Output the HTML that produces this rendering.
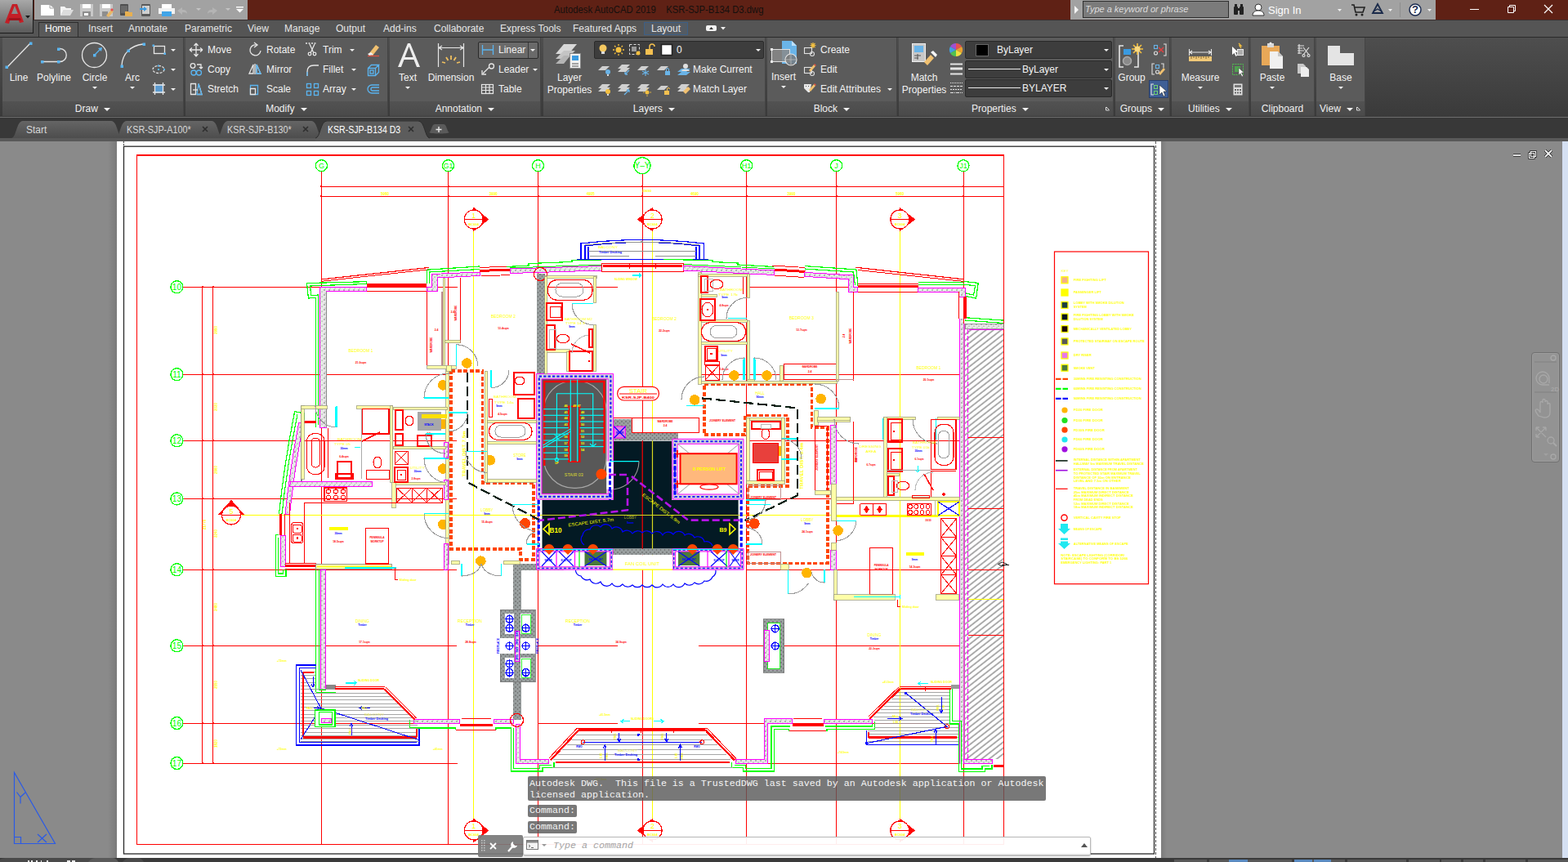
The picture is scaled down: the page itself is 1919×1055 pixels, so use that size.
<!DOCTYPE html>
<html lang="en">
<head>
<meta charset="utf-8">
<title>Autodesk AutoCAD 2019 - KSR-SJP-B134 D3.dwg</title>
<style>
*{box-sizing:border-box;margin:0;padding:0}
html,body{width:1919px;height:1055px;overflow:hidden;background:#8a8a8a;font-family:"Liberation Sans",sans-serif;font-size:12px;color:#f0f0f0}
.abs{position:absolute}
#titlebar{position:absolute;left:0;top:0;width:1919px;height:24px;background:#5f2115}
#appbtn{position:absolute;left:0;top:0;width:41px;height:41px;background:linear-gradient(#a8a8a8,#5a5a5a);border:1px solid #1c1c1c;border-top:none;border-left:none;z-index:5}
#qat{position:absolute;left:42px;top:0;width:261px;height:24px;background:#a2a2a2}
#title{position:absolute;left:678px;top:5px;font-size:12px;color:#15100e;white-space:pre;transform:scaleX(.94);transform-origin:0 0}
#search{position:absolute;left:1310px;top:0;width:447px;height:24px;background:#a2a2a2}
#searchbox{position:absolute;left:15px;top:1px;width:179px;height:21px;background:#7b7b7b;border:1px solid #2e2e2e;color:#dcdcdc;font-style:italic;font-size:11px;line-height:19px;padding-left:2px}
#menurow{position:absolute;left:0;top:24px;width:1919px;height:21px;background:#555;border-top:1px solid #3a3030}
.mt{position:absolute;top:3px;font-size:12px;color:#e6e6e6;white-space:nowrap}
#hometab{position:absolute;left:47px;top:2px;width:49px;height:18px;background:#595959;border:1px solid #2e2e2e;border-bottom:none}
#layouttab{position:absolute;left:788px;top:2px;width:54px;height:16px;background:#545b63;border:1px solid #3d5f86}
#ribbon{position:absolute;left:0;top:45px;width:1919px;height:98px;background:#3f3f3f;border-top:1px solid #2c2c2c}
.panel{position:absolute;top:0px;height:96px;background:#5b5b5b;border-right:1px solid #444}
.ptitle{position:absolute;left:0;right:0;bottom:0;height:18px;background:linear-gradient(#525252,#4a4a4a);text-align:center;font-size:12px;line-height:18px;color:#f0f0f0}
.rl{position:absolute;font-size:12px;color:#f2f2f2;white-space:nowrap}
.dd{position:absolute;width:0;height:0;border-left:3px solid transparent;border-right:3px solid transparent;border-top:3px solid #f0f0f0}
#gap{position:absolute;left:0;top:143px;width:1919px;height:5px;background:#383838;border-top:1px solid #6e6e6e}
#filetabs{position:absolute;left:0;top:148px;width:1919px;height:25px;background:#3b3b3b}
#ftstrip{position:absolute;left:0;top:169px;width:1919px;height:4px;background:#505050}
#draw{position:absolute;left:0;top:173px;width:1919px;height:877px;background:#8a8a8a;overflow:hidden}
#status{position:absolute;left:0;top:1050px;width:1919px;height:5px;background:#3a3a3a}
#cmdhist div{position:absolute;background:rgba(90,90,90,.82);color:#f4f4f4;font-family:"Liberation Mono",monospace;font-size:11.67px;white-space:pre;border-radius:2px}
.pa{display:inline-block;width:0;height:0;border-left:4px solid transparent;border-right:4px solid transparent;border-top:4px solid #f0f0f0;margin-left:4px;position:relative;top:-1px}
.ft{position:absolute;top:4px;white-space:nowrap;transform-origin:0 0}
</style>
</head>
<body>
<div id="titlebar"></div>
<div id="qat">
<svg class="abs" style="left:0;top:0" width="261" height="24" viewBox="42 0 261 24">
<path d="M50 6h11l5 4v9H50z" fill="#fff"/><path d="M61 6v4h5" fill="none" stroke="#a2a2a2" stroke-width="1"/>
<path d="M74 8h5l2 2h6v2H78l-3 7H74z" fill="#f4f4f4"/><path d="M78 12h12l-4 7H74z" fill="#dcdcdc"/>
<path d="M98 5h16v15H98z" fill="#c8c8c8"/><rect x="101" y="5" width="10" height="5" fill="#fff"/><rect x="101" y="14" width="10" height="6" fill="#8e8e8e"/><rect x="103" y="16" width="5" height="3" fill="#fff"/>
<path d="M122 5h16v15H122z" fill="#c8c8c8"/><rect x="125" y="5" width="10" height="5" fill="#fff"/><rect x="125" y="14" width="7" height="6" fill="#8e8e8e"/><path d="M130 19l6-7 3 2-6 7z" fill="#e8b868"/><path d="M135 12l2-2 2 2-2 2z" fill="#e85050"/>
<rect x="147" y="5" width="10" height="14" rx="1" fill="#505050"/><rect x="148" y="7" width="8" height="9" fill="#6a6a6a"/><path d="M153 14h4l1 1h4v5h-9z" fill="#e8b050"/>
<rect x="173" y="5" width="11" height="15" rx="1" fill="#5a5a5a"/><rect x="174" y="7" width="9" height="10" fill="#d0d0d0"/><path d="M171 10h5v-2l4 3-4 3v-2h-5z" fill="#3a9ae0"/>
<path d="M198 5h12v5h-12z" fill="#fff"/><path d="M194 10h20v7h-20z" fill="#f2f2f2"/><rect x="198" y="14" width="12" height="6" fill="#42a5e8"/>
<path d="M217 13l6-4v3c5 0 6 2 6 5-1-2-3-2-6-2v3z" fill="#b4b4b4"/><path d="M240 10h6l-3 3z" fill="#c4c4c4"/>
<path d="M266 13l-6-4v3c-5 0-6 2-6 5 1-2 3-2 6-2v3z" fill="#b4b4b4"/><path d="M276 10h6l-3 3z" fill="#c4c4c4"/>
<rect x="289" y="8" width="9" height="1.5" fill="#f8f8f8"/><path d="M289 11h9l-4.5 4.500z" fill="#f8f8f8"/>
</svg>
</div>
<div id="title">Autodesk AutoCAD 2019    KSR-SJP-B134 D3.dwg</div>
<div id="search">
<svg class="abs" style="left:4px;top:7px" width="8" height="10"><path d="M1 0l5 5-5 5z" fill="#f4f4f4"/></svg>
<div id="searchbox">Type a keyword or phrase</div>
<svg class="abs" style="left:196px;top:0" width="251" height="24" viewBox="1506 0 251 24">
<g fill="#222"><rect x="1510" y="8" width="5" height="10" rx="1"/><rect x="1517" y="8" width="5" height="10" rx="1"/><rect x="1511" y="5" width="3" height="4"/><rect x="1518" y="5" width="3" height="4"/><rect x="1514" y="10" width="4" height="3"/></g>
<circle cx="1540" cy="9" r="4" fill="#fff" stroke="#333" stroke-width="1"/><path d="M1533 19c0-5 4-6 7-6s7 1 7 6z" fill="#fff" stroke="#333" stroke-width="1"/>
<path d="M1637 11h5l-2.500 3z" fill="#f0f0f0"/>
<path d="M1654 6h3l2 9h9l2-6h-12" fill="none" stroke="#222" stroke-width="1.600"/><circle cx="1660" cy="18" r="1.500" fill="#222"/><circle cx="1667" cy="18" r="1.500" fill="#222"/>
<path d="M1686 5l6 11h-12z" fill="none" stroke="#1a2a4a" stroke-width="1.800"/><path d="M1681 14l5-3 5 3" fill="none" stroke="#1a2a4a" stroke-width="1.400"/>
<path d="M1699 11h5l-2.500 3z" fill="#f0f0f0"/>
<rect x="1713" y="3" width="1" height="18" fill="#8e8e8e"/>
<circle cx="1732" cy="12" r="7" fill="#fff" stroke="#1c2c50" stroke-width="1.500"/>
<path d="M1747 11h5l-2.500 3z" fill="#f0f0f0"/>
</svg>
<div class="abs" style="left:242px;top:5px;font-size:13px;color:#fff">Sign In</div>
<div class="abs" style="left:418px;top:4px;font-size:13px;font-weight:bold;color:#1c2c50">?</div>
</div>
<svg class="abs" style="left:1780px;top:0" width="139" height="24" viewBox="1780 0 139 24">
<path d="M1799 11.500h11" stroke="#fff" stroke-width="1"/>
<path d="M1845.500 8.500h7v7h-7z M1847.500 8.500v-2h7v7h-2" fill="none" stroke="#fff" stroke-width="1"/>
<path d="M1890 6l10 10M1900 6l-10 10" stroke="#fff" stroke-width="1.200"/>
</svg>
<div id="appbtn">
<svg class="abs" style="left:0;top:0" width="40" height="40">
<path d="M6 28L15 5h6l8 22-5 1-2-6h-9l-2 7z" fill="#c41e26"/><path d="M14 17l4-10 4 10z" fill="#8a8a8a"/><path d="M11 22h14l1 3H10z" fill="#a0141c"/>
<path d="M31 19h6l-3 3.500z" fill="#1a1a1a"/>
</svg>
</div>
<div id="menurow">
<div id="hometab"></div>
<div id="layouttab"></div>
<div class="mt" style="left:55px;color:#fff">Home</div>
<div class="mt" style="left:108px">Insert</div>
<div class="mt" style="left:157px">Annotate</div>
<div class="mt" style="left:226px">Parametric</div>
<div class="mt" style="left:303px">View</div>
<div class="mt" style="left:348px">Manage</div>
<div class="mt" style="left:411px">Output</div>
<div class="mt" style="left:469px">Add-ins</div>
<div class="mt" style="left:531px">Collaborate</div>
<div class="mt" style="left:612px">Express Tools</div>
<div class="mt" style="left:701px">Featured Apps</div>
<div class="mt" style="left:797px">Layout</div>
<svg class="abs" style="left:862px;top:5px" width="30" height="10"><rect x="2" y="1" width="13" height="7" rx="2" fill="#f2f2f2"/><path d="M6 6l2.500-3 2.500 3z" fill="#333"/><path d="M20 3h6l-3 3.500z" fill="#f0f0f0"/></svg>
</div>
<div id="ribbonbg" class="abs" style="left:0;top:45px;width:1919px;height:98px;background:linear-gradient(#4e4e4e,#3a3a3a);border-top:1px solid #2a2a2a"></div>
<div class="panel" style="left:3px;top:46px;width:222px">
<div class="ptitle">Draw <span class="pa"></span></div>
</div>
<div class="panel" style="left:227px;top:46px;width:248px">
<div class="ptitle">Modify <span class="pa"></span></div>
</div>
<div class="panel" style="left:477px;top:46px;width:185px">
<div class="ptitle">Annotation <span class="pa"></span></div>
</div>
<div class="panel" style="left:665px;top:46px;width:272px">
<div class="ptitle">Layers <span class="pa"></span></div>
</div>
<div class="panel" style="left:939px;top:46px;width:159px">
<div class="ptitle">Block <span class="pa"></span></div>
</div>
<div class="panel" style="left:1100px;top:46px;width:263px">
<div class="ptitle" style="padding-right:14px">Properties <span class="pa"></span></div>
</div>
<div class="panel" style="left:1365px;top:46px;width:67px">
<div class="ptitle">Groups <span class="pa"></span></div>
</div>
<div class="panel" style="left:1434px;top:46px;width:95px">
<div class="ptitle">Utilities <span class="pa"></span></div>
</div>
<div class="panel" style="left:1531px;top:46px;width:78px">
<div class="ptitle">Clipboard</div>
</div>
<div class="panel" style="left:1611px;top:46px;width:60px">
<div class="ptitle" style="text-align:left;padding-left:4px">View <span class="pa"></span></div>
</div>
<div class="rl" style="left:-27px;top:88px;width:100px;text-align:center">Line</div>
<div class="rl" style="left:16px;top:88px;width:100px;text-align:center">Polyline</div>
<div class="rl" style="left:66px;top:88px;width:100px;text-align:center">Circle</div>
<div class="rl" style="left:112px;top:88px;width:100px;text-align:center">Arc</div>
<div class="dd" style="left:113px;top:106px"></div>
<div class="dd" style="left:159px;top:106px"></div>
<div class="dd" style="left:209px;top:60px"></div>
<div class="dd" style="left:209px;top:84px"></div>
<div class="dd" style="left:209px;top:108px"></div>
<div class="rl" style="left:254px;top:54px">Move</div>
<div class="rl" style="left:254px;top:78px">Copy</div>
<div class="rl" style="left:254px;top:102px">Stretch</div>
<div class="rl" style="left:326px;top:54px">Rotate</div>
<div class="rl" style="left:326px;top:78px">Mirror</div>
<div class="rl" style="left:326px;top:102px">Scale</div>
<div class="rl" style="left:395px;top:54px">Trim</div>
<div class="rl" style="left:395px;top:78px">Fillet</div>
<div class="rl" style="left:395px;top:102px">Array</div>
<div class="dd" style="left:428px;top:60px"></div>
<div class="dd" style="left:430px;top:84px"></div>
<div class="dd" style="left:430px;top:108px"></div>
<div class="rl" style="left:449px;top:88px;width:100px;text-align:center">Text</div>
<div class="dd" style="left:496px;top:106px"></div>
<div class="rl" style="left:502px;top:88px;width:100px;text-align:center">Dimension</div>
<div class="abs" style="left:585px;top:51px;width:74px;height:21px;background:#6a6a6a;border:1px solid #2a2a2a;border-radius:2px"></div><div class="abs" style="left:646px;top:52px;width:1px;height:19px;background:#3a3a3a"></div>
<div class="rl" style="left:610px;top:54px">Linear</div>
<div class="rl" style="left:610px;top:78px">Leader</div>
<div class="rl" style="left:610px;top:102px">Table</div>
<div class="dd" style="left:649px;top:60px"></div>
<div class="dd" style="left:652px;top:84px"></div>
<div class="rl" style="left:647px;top:88px;width:100px;text-align:center">Layer</div>
<div class="rl" style="left:647px;top:103px;width:100px;text-align:center">Properties</div>
<div class="abs" style="left:727px;top:50px;width:208px;height:22px;background:#3d3d3d;border:1px solid #2a2a2a;border-radius:2px"></div>
<div class="rl" style="left:828px;top:54px">0</div>
<div class="dd" style="left:925px;top:60px"></div>
<div class="rl" style="left:848px;top:78px">Make Current</div>
<div class="rl" style="left:848px;top:102px">Match Layer</div>
<div class="rl" style="left:909px;top:87px;width:100px;text-align:center">Insert</div>
<div class="dd" style="left:956px;top:105px"></div>
<div class="rl" style="left:1004px;top:54px">Create</div>
<div class="rl" style="left:1004px;top:78px">Edit</div>
<div class="rl" style="left:1004px;top:102px">Edit Attributes</div>
<div class="dd" style="left:1086px;top:108px"></div>
<div class="rl" style="left:1081px;top:88px;width:100px;text-align:center">Match</div>
<div class="rl" style="left:1081px;top:103px;width:100px;text-align:center">Properties</div>
<div class="abs" style="left:1181px;top:50px;width:180px;height:22px;background:#3d3d3d;border:1px solid #2a2a2a;border-radius:2px"></div>
<div class="rl" style="left:1220px;top:54px">ByLayer</div>
<div class="dd" style="left:1351px;top:60px"></div>
<div class="abs" style="left:1181px;top:74px;width:180px;height:22px;background:#3d3d3d;border:1px solid #2a2a2a;border-radius:2px"></div>
<div class="rl" style="left:1251px;top:78px">ByLayer</div>
<div class="dd" style="left:1351px;top:84px"></div>
<div class="abs" style="left:1181px;top:97px;width:180px;height:22px;background:#3d3d3d;border:1px solid #2a2a2a;border-radius:2px"></div>
<div class="rl" style="left:1251px;top:101px">BYLAYER</div>
<div class="dd" style="left:1351px;top:107px"></div>
<div class="abs" style="left:1194px;top:54px;width:16px;height:15px;background:#000;border:1px solid #666"></div>
<div class="abs" style="left:1185px;top:84px;width:64px;height:1px;background:#e8e8e8"></div><div class="abs" style="left:1185px;top:107px;width:64px;height:1px;background:#e8e8e8"></div>
<div class="rl" style="left:1335px;top:88px;width:100px;text-align:center">Group</div>
<div class="abs" style="left:1406px;top:98px;width:24px;height:22px;background:#3f5f96;border:1px solid #2a3f6a"></div>
<div class="rl" style="left:1419px;top:88px;width:100px;text-align:center">Measure</div>
<div class="dd" style="left:1466px;top:106px"></div>
<div class="rl" style="left:1507px;top:88px;width:100px;text-align:center">Paste</div>
<div class="dd" style="left:1554px;top:106px"></div>
<div class="rl" style="left:1591px;top:88px;width:100px;text-align:center">Base</div>
<div class="dd" style="left:1638px;top:106px"></div>
<svg class="abs" style="left:0;top:45px" width="1919" height="98" viewBox="0 45 1919 98" fill="none" stroke-linecap="butt">
<g id="draw-icons" stroke="#e6e6e6" stroke-width="1.300">
<path d="M9 82L37 53"/><g fill="#5ab4f0" stroke="none"><rect x="6.500" y="80.500" width="3.500" height="3.500"/><rect x="36" y="51.500" width="3.500" height="3.500"/></g>
<path d="M52 75.500h19M73 59.500c11 0 11 16 0 16"/><g fill="#5ab4f0" stroke="none"><rect x="50" y="74" width="3.500" height="3.500"/><rect x="70" y="74" width="3.500" height="3.500"/><rect x="70" y="58.500" width="3.500" height="3.500"/></g>
<circle cx="115.500" cy="67.500" r="15"/><path d="M116 67l8-8" stroke="#5ab4f0"/><path d="M125 58l-1 5-4-4z" fill="#5ab4f0" stroke="none"/><rect x="114" y="66" width="3.500" height="3.500" fill="#5ab4f0" stroke="none"/>
<path d="M149 80c1-15 11-24 26-26"/><g fill="#5ab4f0" stroke="none"><rect x="147.500" y="79.500" width="3.500" height="3.500"/><rect x="155.500" y="60.500" width="3.500" height="3.500"/><rect x="174.500" y="52.500" width="3.500" height="3.500"/></g>
<rect x="188.500" y="56.500" width="13" height="9"/><g fill="#5ab4f0" stroke="none"><rect x="186.500" y="54.500" width="2.500" height="2.500"/><rect x="200.500" y="64.500" width="2.500" height="2.500"/></g>
<ellipse cx="194" cy="85" rx="7" ry="4.500" stroke-dasharray="3 1.500"/><g fill="#5ab4f0" stroke="none"><rect x="193" y="84" width="2" height="2"/><rect x="193" y="79.500" width="2" height="2"/><rect x="200" y="84" width="2" height="2"/></g>
<rect x="189" y="103" width="11" height="11" fill="#5a9ad0" stroke="none"/><path d="M187 104h15M187 113h15M189.500 101v15M199.500 101v15"/>
</g>
<g id="modify-icons" stroke="#e6e6e6" stroke-width="1.300">
<path d="M240 53v16M232 61h16M240 53l-2.500 3M240 53l2.500 3M240 69l-2.500-3M240 69l2.500-3M232 61l3-2.500M232 61l3 2.500M248 61l-3-2.500M248 61l-3 2.500"/>
<circle cx="236" cy="80.500" r="2.800"/><circle cx="237" cy="89" r="3" stroke="#5ab4f0"/><circle cx="243.500" cy="89" r="3" stroke="#5ab4f0"/><path d="M241 79h5v5M246 84l-2-2M246 84l2-2" />
<path d="M233.500 102.500h6v13h-6zM241 115.500h6l-4-13" /><path d="M241 115.500h6l-4-13z" stroke="#5ab4f0"/><path d="M236 110h6" />
<path d="M319 62a6.500 6.500 0 1 1-5-7" /><path d="M311 52l4 3-4 3" />
<path d="M312 78v13M310 90h-5l5-11zM314 90h5l-5-11z"/><path d="M314 90h5l-5-11z" stroke="#5ab4f0"/>
<path d="M306.500 104.500h9v11h-9z" stroke="#5ab4f0"/><path d="M306.500 108.500h6v7h-6z" fill="#595959"/>
<path d="M374 53h14" stroke-dasharray="2 1.500"/><path d="M379 54l5 11M385 54l-5 11"/><circle cx="379" cy="66" r="1.800"/><circle cx="385" cy="66" r="1.800"/>
<path d="M376 93v-5c0-5 3-8 8-8h6" /><path d="M376 93v-5" stroke="#5ab4f0"/>
<g stroke="#5ab4f0"><rect x="375.500" y="102.500" width="5" height="5"/><rect x="384.500" y="102.500" width="5" height="5"/><rect x="375.500" y="111.500" width="5" height="5"/><rect x="384.500" y="111.500" width="5" height="5"/></g>
<path d="M452 65l8-10 4 3-8 10z" fill="#f0c070" stroke="none"/><path d="M450 66l4-2 3 3-5 1z" fill="#f2f2f2" stroke="none"/><path d="M450 68.500h14" stroke="#e05040"/>
<g stroke="#5ab4f0"><path d="M450.500 83.500h9v9h-9zM450.500 83.500l4-4h9l-4 4M459.500 92.500l4-4v-9"/><rect x="453" y="86" width="4" height="4"/></g>
<g stroke="#5ab4f0"><path d="M464 104h-9a5 5 0 0 0 0 10h9M464 107h-8a2 2 0 0 0 0 4h8"/></g>
</g>
<g id="annot-icons">
<path d="M487 82L499 53h3L514 82h-4l-3.500-9h-12L491 82zM495.500 70h10l-5-13z" fill="#ededed" fill-rule="evenodd"/>
<g stroke="#e6e6e6" stroke-width="1.200"><path d="M536.500 53v29M567.500 53v29M537 58.500h30M537 58.500l4-2.500M537 58.500l4 2.500M567 58.500l-4-2.500M567 58.500l-4 2.500"/></g>
<g stroke="#f0c060" stroke-width="1.800"><path d="M552 68v5M546 70l2.500 4M558 70l-2.500 4M541 76l4 1M563 76l-4 1"/></g>
<g stroke="#5ab4f0" stroke-width="1.300"><path d="M590.500 55v12M603.500 55v12M591 61h12"/></g>
<g stroke="#e6e6e6" stroke-width="1.300"><path d="M591 90l8-8"/><circle cx="601.500" cy="81" r="3"/><path d="M590 86v5h5"/></g>
<g stroke="#e6e6e6" stroke-width="1.200"><rect x="589.500" y="103.500" width="14" height="11"/><path d="M589.500 107h14M589.500 110.500h14M594.500 104v11M599 104v11"/></g>
</g>
<g id="layer-icons">
<g fill="#d8d8d8"><path d="M680 66l10-12h16l-10 12z"/><path d="M680 72l10-10h14l-10 10z" fill="#c4c4c4"/><path d="M680 78l10-10h8l-8 10z" fill="#b4b4b4"/></g>
<rect x="697.500" y="65.500" width="13" height="18" fill="#f0f0f0" stroke="#888"/><rect x="700" y="68" width="8" height="6" fill="#3a9ae0"/><path d="M700 78h8M700 81h8" stroke="#555"/>
<circle cx="738" cy="59" r="4.500" fill="#f4c860"/><rect x="736" y="63" width="4" height="3" fill="#ddd"/>
<circle cx="757" cy="61" r="3.500" fill="#f4c040"/><g stroke="#f4c040" stroke-width="1.300"><path d="M757 54v2M757 66v2M750 61h2M762 61h2M752 56l1.500 1.500M762 56l-1.500 1.500M752 66l1.500-1.500M762 66l-1.500-1.500"/></g>
<rect x="770.500" y="54.500" width="12" height="12" stroke="#ddd" stroke-dasharray="3 2"/><rect x="773" y="57" width="6" height="6" fill="#999"/><circle cx="781" cy="65" r="2.500" fill="#f4c040"/>
<rect x="790" y="60" width="9" height="7" fill="#f4c050"/><path d="M795 60v-3a3 3 0 0 1 6 0" stroke="#f4c050" stroke-width="1.500"/>
<rect x="809.500" y="54.500" width="13" height="13" fill="#fff" stroke="#222" stroke-width="1.500"/>
<g id="lr2">
<g fill="#d0d0d0"><path d="M732 86l5-5h9l-5 5z"/><path d="M756 84l5-5h10l-5 5zM756 88l5-5h10l-5 5z"/><path d="M780 86l5-5h9l-5 5z"/><path d="M804 86l5-5h9l-5 5z"/><path d="M829 88l5-4h11l-5 4zM829 92l5-4h11l-5 4z" fill="#6ab4e8"/></g>
<circle cx="744" cy="88" r="3" fill="#6ab4e8"/><rect x="743" y="91" width="2" height="2" fill="#ddd"/>
<path d="M770 86l-5 5M765 91v-3M765 91h3" stroke="#6ab4e8" stroke-width="1.300"/>
<g stroke="#6ab4e8" stroke-width="1.200"><path d="M790 85v8M786 87l8 4M794 87l-8 4"/></g>
<rect x="814" y="87" width="6" height="5" fill="#6ab4e8"/><path d="M815.500 87v-2a1.500 1.500 0 0 1 3 0v2" stroke="#6ab4e8"/>
<circle cx="839" cy="81" r="3" fill="#e0e0e0"/><path d="M834 87c0-3 10-3 10 0z" fill="#e0e0e0"/>
</g>
<g id="lr3">
<g fill="#d0d0d0"><path d="M732 108l5-5h10l-5 5zM732 112l5-5h10l-5 5z"/><path d="M756 108l5-5h10l-5 5zM756 112l5-5h10l-5 5z"/><path d="M780 108l5-5h10l-5 5zM780 112l5-5h10l-5 5z"/><path d="M804 110l5-5h9l-5 5z"/><path d="M829 108l5-5h10l-5 5zM829 112l5-5h10l-5 5z"/></g>
<circle cx="744" cy="112" r="3" fill="#f4c040"/><rect x="743" y="115" width="2" height="2" fill="#ddd"/>
<path d="M764 116l6-6M770 110v3M770 110h-3" stroke="#6ab4e8" stroke-width="1.300"/>
<circle cx="792" cy="113" r="2.500" fill="#f4c040"/><g stroke="#f4c040"><path d="M792 108v1.500M792 116.500v1.500M787 113h1.500M795.500 113h1.500"/></g>
<rect x="813" y="111" width="6" height="5" fill="#f4c050"/><path d="M816.500 111v-2a1.500 1.500 0 0 1 3 0" stroke="#f4c050"/>
<path d="M836 112l6-6 3 3-6 6z" fill="#f0c070"/>
</g>
</g>
<g id="block-icons">
<path d="M957 50h12l6 6v22h-18z" fill="#6ab4e8"/><path d="M969 50v6h6z" fill="#bfe0f8"/>
<rect x="944.500" y="60.500" width="22" height="15" fill="#8a8a8a" fill-opacity=".85" stroke="#e0e0e0"/><circle cx="968" cy="73" r="7" fill="#777" fill-opacity=".8" stroke="#e0e0e0" stroke-width="1.200"/><path d="M968 66v14M961 73h14" stroke="#bbb" stroke-width=".8"/>
<rect x="943" y="59" width="3" height="3" fill="#e8e8e8"/><rect x="943" y="74" width="3" height="3" fill="#e8e8e8"/>
<g stroke="#e0e0e0" stroke-width="1.100"><rect x="984.500" y="58.500" width="9" height="7"/><circle cx="994" cy="66" r="2.500"/></g><g stroke="#f4c040" stroke-width="1.200"><path d="M995 52v7M991.500 55.500h7M992.500 53l5 5M997.500 53l-5 5"/></g>
<g stroke="#e0e0e0" stroke-width="1.100"><rect x="984.500" y="82.500" width="9" height="7"/><circle cx="994" cy="90" r="2.500"/></g><path d="M990 86l6-7 2 2-6 7z" fill="#f0c070"/><path d="M996 79l1-1 2 2-1 1z" fill="#e05040"/>
<path d="M984 103h9l-2 10h-2l-5-5z" fill="#e8e8e8"/><path d="M986 105l1 1M989 105l1 1" stroke="#555"/><path d="M990 110l6-7 2 2-6 7z" fill="#f0c070"/><path d="M996 103l1-1 2 2-1 1z" fill="#e05040"/>
</g>
<g id="prop-icons">
<rect x="1116.500" y="53.500" width="16" height="22" fill="#c8c8c8" stroke="#eee"/><rect x="1119" y="56" width="11" height="8" fill="#6ab4e8"/><path d="M1119 68h8M1119 71h5" stroke="#555"/><path d="M1123 66v7" stroke="#555"/>
<path d="M1131 76l8-9 4 4-8 9z" fill="#f0c070"/><path d="M1139 64l3-2 5 5-2 3z" fill="#f8f8f8"/>
<g><path d="M1170 61L1170 53A8 8 0 0 1 1177 57z" fill="#e85050"/><path d="M1170 61L1177 57A8 8 0 0 1 1177 65z" fill="#e8a030"/><path d="M1170 61L1177 65A8 8 0 0 1 1170 69z" fill="#f0e040"/><path d="M1170 61L1170 69A8 8 0 0 1 1163 65z" fill="#50c050"/><path d="M1170 61L1163 65A8 8 0 0 1 1163 57z" fill="#40a0e0"/><path d="M1170 61L1163 57A8 8 0 0 1 1170 53z" fill="#a050d0"/></g>
<g stroke="#e4e4e4"><path d="M1163 78.500h15" stroke-width="2"/><path d="M1163 84h15" stroke-width="3"/><path d="M1163 90.500h15" stroke-width="2"/></g>
<g stroke="#e4e4e4" stroke-width="1"><path d="M1163 101.500h15" stroke-dasharray="1 1"/><path d="M1163 105.500h15" stroke-dasharray="3 1"/><path d="M1163 109.500h15" stroke-dasharray="2 1"/><path d="M1163 113.500h15" stroke-dasharray="4 1 1 1"/></g>
<path d="M1353.500 131v4h4M1354 131l3.500 3.500" stroke="#ddd"/>
</g>
<g id="group-icons">
<path d="M1375 56h-5v26h5M1393 63v19h-5" stroke="#e6e6e6" stroke-width="1.600"/><rect x="1375" y="60" width="9" height="7" fill="#3a9ae0"/><circle cx="1379.500" cy="74.500" r="5" fill="#8a8a8a" stroke="#aaa" stroke-width="1.500"/>
<g stroke="#f4c040" stroke-width="1.600"><path d="M1392 53v14M1385 60h14M1387 55l10 10M1397 55l-10 10"/></g><circle cx="1392" cy="60" r="3.500" fill="#f8d880"/>
<g stroke="#e0e0e0" stroke-width="1.100"><path d="M1424 54h3v14h-3"/><rect x="1412.500" y="55.500" width="4" height="4" stroke="#6ab4e8"/><circle cx="1414.500" cy="65" r="2"/></g><path d="M1418 58l6 6M1424 58l-6 6" stroke="#e04040" stroke-width="1.500"/>
<g stroke="#e0e0e0" stroke-width="1.100"><path d="M1413 78h-3v13h3M1421 78h3v5"/><rect x="1414.500" y="79.500" width="4" height="4" stroke="#6ab4e8"/><circle cx="1416.500" cy="88" r="2"/></g><path d="M1418 90l6-7 2 2-6 7z" fill="#f0c070"/>
<g stroke="#e8e8e8" stroke-width="1.100"><path d="M1412 103h-3v13h3"/></g><rect x="1412.500" y="104.500" width="4" height="4" stroke="#70d070" /><rect x="1412.500" y="111.500" width="4" height="4" stroke="#70d070" /><path d="M1419 104v12l3-3 2 5 2-1-2-5h4z" fill="#fff" stroke="#222" stroke-width=".6"/>
</g>
<g id="util-icons">
<g stroke="#e6e6e6" stroke-width="1.100"><path d="M1455.500 60v8M1482.500 60v8M1456 64h26M1456 64l3-2M1456 64l3 2M1482 64l-3-2M1482 64l-3 2"/></g>
<rect x="1455" y="69" width="28" height="6" fill="#f0c878"/><path d="M1458 69v3M1461 69v2M1464 69v3M1467 69v2M1470 69v3M1473 69v2M1476 69v3M1479 69v2" stroke="#7a6030"/>
<path d="M1508 57v10l2.500-2 2 4 1.500-1-2-4h3.500z" fill="#fff"/><rect x="1514" y="60" width="8" height="8" fill="#e8e8e8"/><path d="M1515 62h6M1515 64h6M1515 66h6" stroke="#555" stroke-width=".8"/><path d="M1516 53l3 3h-2l2 3" stroke="#f4c040" stroke-width="1.300"/>
<rect x="1508.500" y="78.500" width="13" height="13" stroke="#50c050" stroke-dasharray="2 1"/><rect x="1511" y="81" width="7" height="7" fill="#50a050"/><path d="M1516 83v9l2-2 2 4 1.500-1-2-4h3z" fill="#fff" stroke="#333" stroke-width=".5"/>
<rect x="1509.500" y="102.500" width="11" height="14" fill="#e0e0e0"/><rect x="1511" y="104" width="8" height="3" fill="#777"/><g fill="#666"><rect x="1511" y="109" width="2" height="2"/><rect x="1514" y="109" width="2" height="2"/><rect x="1517" y="109" width="2" height="2"/><rect x="1511" y="112.500" width="2" height="2"/><rect x="1514" y="112.500" width="2" height="2"/><rect x="1517" y="112.500" width="2" height="2"/></g>
</g>
<g id="clip-icons">
<rect x="1544" y="56" width="22" height="24" fill="#e8a858"/><rect x="1551" y="53" width="8" height="5" fill="#d8d8d8"/><circle cx="1555" cy="53" r="1.500" fill="#eee"/>
<path d="M1554 63h10l6 6v15h-16z" fill="#f0f0f0"/><path d="M1564 63v6h6z" fill="#c8c8c8"/>
<g stroke="#e0e0e0" stroke-width="1.200"><path d="M1588 56h8M1588 59h6M1588 62h8M1588 65h5M1590 54v12"/><path d="M1595 58l7 9M1602 58l-7 9"/><circle cx="1595.500" cy="68" r="1.500"/><circle cx="1601.500" cy="68" r="1.500"/></g>
<path d="M1588 78h7l3 3v9h-10z" fill="#c8c8c8"/><path d="M1592 82h7l3 3v9h-10z" fill="#eee"/>
</g>
<g id="view-icons"><path d="M1625 56h15v9h17v15h-32z" fill="#e4e4e4"/><path d="M1660.500 131v4h4M1661 131l3.500 3.500" stroke="#ddd"/></g>
</svg>
<div id="gap"></div>
<div id="filetabs">
<svg class="abs" style="left:0;top:0" width="1919" height="25" viewBox="0 148 1919 25">
<rect x="0" y="148" width="1919" height="25" fill="#383838"/>
<rect x="0" y="169" width="1919" height="4" fill="#595959"/>
<defs><linearGradient id="tg" x1="0" y1="0" x2="0" y2="1"><stop offset="0" stop-color="#656565"/><stop offset="1" stop-color="#4d4d4d"/></linearGradient></defs>
<path d="M14 169c6 0 6-21 14-21h108c8 0 8 21 14 21z" fill="url(#tg)"/>
<path d="M141 169c6 0 6-21 14-21h104c8 0 8 21 14 21z" fill="url(#tg)"/>
<path d="M265 169c6 0 6-21 14-21h102c8 0 8 21 14 21z" fill="url(#tg)"/>
<path d="M386 173v-4c6 0 6-21 14-21h112c8 0 8 21 14 21v4z" fill="#5c5c5c"/>
<path d="M386 169c6 0 6-21 14-21h112c8 0 8 21 14 21" fill="none" stroke="#2c2c2c" stroke-width="1"/>
<path d="M525 162c3 0 3-10 7-10h11c4 0 4 10 7 10c-3 2-22 2-25 0z" fill="#5a5a5a"/>
<path d="M533.500 158.500h7M537 155v7" stroke="#e8e8e8" stroke-width="1.400"/>
<g stroke="#2e2e2e" stroke-width="1.600"><path d="M248 155l6 6M254 155l-6 6"/><path d="M371 155l6 6M377 155l-6 6"/><path d="M500 155l6 6M506 155l-6 6"/></g>
</svg>
<div class="ft" style="left:32px;color:#d8d8d8">Start</div>
<div class="ft" style="left:155px;color:#d8d8d8;transform:scaleX(.9)">KSR-SJP-A100*</div>
<div class="ft" style="left:278px;color:#d8d8d8;transform:scaleX(.9)">KSR-SJP-B130*</div>
<div class="ft" style="left:401px;color:#fff;transform:scaleX(.88)">KSR-SJP-B134 D3</div>
</div>
<div id="draw">
<svg class="abs" style="left:0;top:0" width="1919" height="877" viewBox="0 173 1919 877" font-family="Liberation Sans, sans-serif">
<defs>
<linearGradient id="shl" x1="0" y1="0" x2="1" y2="0"><stop offset="0" stop-color="#8a8a8a"/><stop offset="1" stop-color="#7a7a7a"/></linearGradient>
<linearGradient id="shr" x1="0" y1="0" x2="1" y2="0"><stop offset="0" stop-color="#7c7c7c"/><stop offset="1" stop-color="#8a8a8a"/></linearGradient>
<pattern id="hatch" width="5.700" height="5.700" patternUnits="userSpaceOnUse" patternTransform="rotate(-38)"><rect width="5.700" height="5.700" fill="#fff"/><line x1="0" y1="1" x2="5.700" y2="1" stroke="#646464" stroke-width="1.050"/></pattern>
<pattern id="conc" width="6" height="6" patternUnits="userSpaceOnUse"><rect width="6" height="6" fill="#e8e8e8"/><circle cx="1" cy="1" r=".7" fill="#555"/><circle cx="4" cy="3" r=".6" fill="#666"/><circle cx="2" cy="5" r=".5" fill="#777"/></pattern>
<pattern id="conc2" width="5" height="5" patternUnits="userSpaceOnUse"><rect width="5" height="5" fill="#9aa0a0"/><circle cx="1" cy="1" r=".8" fill="#555"/><circle cx="3.500" cy="3" r=".8" fill="#666"/></pattern>
<pattern id="blued" width="6" height="6" patternUnits="userSpaceOnUse"><rect width="6" height="6" fill="#d8d8f0"/><rect x="0" y="0" width="3" height="3" fill="#2020e0"/><rect x="3" y="3" width="3" height="3" fill="#8a30c8"/></pattern>
</defs>
<rect x="0" y="173" width="1919" height="877" fill="#8a8a8a"/>
<rect x="132" y="173" width="11" height="877" fill="url(#shl)"/>
<rect x="1421" y="173" width="7" height="877" fill="url(#shr)"/>
<rect x="1912" y="173" width="7" height="877" fill="#d5e0f2"/>
<rect x="143" y="173" width="1278" height="877" fill="#fff"/>
<rect x="151.500" y="179.200" width="1261" height="865.800" fill="none" stroke="#2a2a2a" stroke-width="1.300"/><path d="M151.500 173v6" stroke="#444" stroke-width="1" stroke-dasharray="2 1"/>
<path d="M1414.500 173v877" stroke="#555" stroke-width="1" stroke-dasharray="3 2"/>
<g id="grid" font-family="Liberation Sans, sans-serif" shape-rendering="crispEdges">
<rect x="167.5" y="190" width="1061" height="843.5" fill="none" stroke="#ff0000" stroke-width="1.2"/>
<path d="M393.4 210L393.4 1033" stroke="#ff0000" stroke-width="1" fill="none"/>
<path d="M548.6 210L548.6 1033" stroke="#ff0000" stroke-width="1" fill="none"/>
<path d="M658.5 210L658.5 1033" stroke="#ff0000" stroke-width="1" fill="none"/>
<path d="M786.2 210L786.2 1033" stroke="#ff0000" stroke-width="1" fill="none"/>
<path d="M913.6 210L913.6 1033" stroke="#ff0000" stroke-width="1" fill="none"/>
<path d="M1023.6 210L1023.6 1033" stroke="#ff0000" stroke-width="1" fill="none"/>
<path d="M1179 210L1179 1033" stroke="#ff0000" stroke-width="1" fill="none"/>
<path d="M393 228L1228 228" stroke="#ff0000" stroke-width="1" fill="none"/>
<path d="M393 240L1228 240" stroke="#ff0000" stroke-width="1" fill="none"/>
<rect x="392.4" y="227" width="2" height="2" fill="#ff0000"/>
<rect x="392.4" y="239" width="2" height="2" fill="#ff0000"/>
<rect x="547.6" y="227" width="2" height="2" fill="#ff0000"/>
<rect x="547.6" y="239" width="2" height="2" fill="#ff0000"/>
<rect x="657.5" y="227" width="2" height="2" fill="#ff0000"/>
<rect x="657.5" y="239" width="2" height="2" fill="#ff0000"/>
<rect x="785.2" y="227" width="2" height="2" fill="#ff0000"/>
<rect x="785.2" y="239" width="2" height="2" fill="#ff0000"/>
<rect x="912.6" y="227" width="2" height="2" fill="#ff0000"/>
<rect x="912.6" y="239" width="2" height="2" fill="#ff0000"/>
<rect x="1022.6" y="227" width="2" height="2" fill="#ff0000"/>
<rect x="1022.6" y="239" width="2" height="2" fill="#ff0000"/>
<rect x="1178" y="227" width="2" height="2" fill="#ff0000"/>
<rect x="1178" y="239" width="2" height="2" fill="#ff0000"/>
<text x="471" y="238.5" fill="#ffff00" font-size="4.5" text-anchor="middle" font-weight="bold">5960</text>
<text x="603.7" y="238.5" fill="#ffff00" font-size="4.5" text-anchor="middle" font-weight="bold">3990</text>
<text x="722.8" y="238.5" fill="#ffff00" font-size="4.5" text-anchor="middle" font-weight="bold">4905</text>
<text x="850" y="238.5" fill="#ffff00" font-size="4.5" text-anchor="middle" font-weight="bold">4690</text>
<text x="968.4" y="238.5" fill="#ffff00" font-size="4.5" text-anchor="middle" font-weight="bold">3990</text>
<text x="1101.3" y="238.5" fill="#ffff00" font-size="4.5" text-anchor="middle" font-weight="bold">5960</text>
<text x="786" y="235" fill="#ffff00" font-size="4" text-anchor="start" font-weight="bold">33690</text>
<path d="M247.6 351L247.6 934" stroke="#ff0000" stroke-width="1" fill="none"/>
<path d="M260.8 351L260.8 934" stroke="#ff0000" stroke-width="1" fill="none"/>
<rect x="246.6" y="350.2" width="2" height="2" fill="#ff0000"/>
<rect x="259.8" y="350.2" width="2" height="2" fill="#ff0000"/>
<rect x="246.6" y="457.2" width="2" height="2" fill="#ff0000"/>
<rect x="259.8" y="457.2" width="2" height="2" fill="#ff0000"/>
<rect x="246.6" y="538.3" width="2" height="2" fill="#ff0000"/>
<rect x="259.8" y="538.3" width="2" height="2" fill="#ff0000"/>
<rect x="246.6" y="609.4" width="2" height="2" fill="#ff0000"/>
<rect x="259.8" y="609.4" width="2" height="2" fill="#ff0000"/>
<rect x="246.6" y="696.2" width="2" height="2" fill="#ff0000"/>
<rect x="259.8" y="696.2" width="2" height="2" fill="#ff0000"/>
<rect x="246.6" y="789.3" width="2" height="2" fill="#ff0000"/>
<rect x="259.8" y="789.3" width="2" height="2" fill="#ff0000"/>
<rect x="246.6" y="884" width="2" height="2" fill="#ff0000"/>
<rect x="259.8" y="884" width="2" height="2" fill="#ff0000"/>
<rect x="246.6" y="933" width="2" height="2" fill="#ff0000"/>
<rect x="259.8" y="933" width="2" height="2" fill="#ff0000"/>
<text x="266" y="404" fill="#ffff00" font-size="4.5" text-anchor="middle" font-weight="bold" transform="rotate(-90 266 404)">3990</text>
<text x="266" y="498" fill="#ffff00" font-size="4.5" text-anchor="middle" font-weight="bold" transform="rotate(-90 266 498)">3030</text>
<text x="266" y="575" fill="#ffff00" font-size="4.5" text-anchor="middle" font-weight="bold" transform="rotate(-90 266 575)">2660</text>
<text x="266" y="653" fill="#ffff00" font-size="4.5" text-anchor="middle" font-weight="bold" transform="rotate(-90 266 653)">3240</text>
<text x="266" y="743" fill="#ffff00" font-size="4.5" text-anchor="middle" font-weight="bold" transform="rotate(-90 266 743)">3480</text>
<text x="266" y="838" fill="#ffff00" font-size="4.5" text-anchor="middle" font-weight="bold" transform="rotate(-90 266 838)">3550</text>
<text x="266" y="910" fill="#ffff00" font-size="4.5" text-anchor="middle" font-weight="bold" transform="rotate(-90 266 910)">1820</text>
<text x="252" y="642" fill="#ffff00" font-size="4.5" text-anchor="middle" font-weight="bold" transform="rotate(-90 252 642)">21770</text>
<path d="M224 351.2L560 351.2" stroke="#ff0000" stroke-width="1" fill="none"/>
<path d="M668 351.2L756 351.2" stroke="#ff0000" stroke-width="1" fill="none"/>
<path d="M917 351.2L1050 351.2" stroke="#ff0000" stroke-width="1" fill="none"/>
<path d="M224 458.2L546 458.2" stroke="#ff0000" stroke-width="1" fill="none"/>
<path d="M855 458.2L1190 458.2" stroke="#ff0000" stroke-width="1" fill="none"/>
<path d="M224 539.3L559 539.3" stroke="#ff0000" stroke-width="1" fill="none"/>
<path d="M914 539.3L1190 539.3" stroke="#ff0000" stroke-width="1" fill="none"/>
<path d="M224 610.4L559 610.4" stroke="#ff0000" stroke-width="1" fill="none"/>
<path d="M914 610.4L1190 610.4" stroke="#ff0000" stroke-width="1" fill="none"/>
<path d="M224 697.2L559 697.2" stroke="#ff0000" stroke-width="1" fill="none"/>
<path d="M914 697.2L1190 697.2" stroke="#ff0000" stroke-width="1" fill="none"/>
<path d="M224 790.3L559 790.3" stroke="#ff0000" stroke-width="1" fill="none"/>
<path d="M658 790.3L755.6 790.3" stroke="#ff0000" stroke-width="1" fill="none"/>
<path d="M855.4 790.3L1190 790.3" stroke="#ff0000" stroke-width="1" fill="none"/>
<path d="M224 885L560 885" stroke="#ff0000" stroke-width="1" fill="none"/>
<path d="M658 885L755.6 885" stroke="#ff0000" stroke-width="1" fill="none"/>
<path d="M855.4 885L1190 885" stroke="#ff0000" stroke-width="1" fill="none"/>
<path d="M224 934L560 934" stroke="#ff0000" stroke-width="1" fill="none"/>
<path d="M930 934L1190 934" stroke="#ff0000" stroke-width="1" fill="none"/>
<path d="M1185 535.2L1228 535.2" stroke="#ff0000" stroke-width="1" fill="none"/>
<path d="M1185 622.3L1228 622.3" stroke="#ff0000" stroke-width="1" fill="none"/>
<path d="M1185 697.2L1228 697.2" stroke="#ff0000" stroke-width="1" fill="none"/>
<path d="M1185 777L1228 777" stroke="#ff0000" stroke-width="1" fill="none"/>
<path d="M579.7 281L579.7 1004" stroke="#ffff00" stroke-width="1.2" fill="none"/>
<path d="M798.5 281L798.5 1004" stroke="#ffff00" stroke-width="1.2" fill="none"/>
<path d="M1101.3 281L1101.3 1004" stroke="#ffff00" stroke-width="1.2" fill="none"/>
<path d="M296 630.5L1228 630.5" stroke="#ffff00" stroke-width="1.2" fill="none"/>
<circle cx="393.4" cy="202.7" r="7" fill="#fff" stroke="#00ff00" stroke-width="1.3"/>
<text x="393.4" y="206" fill="#00ff00" font-size="9" text-anchor="middle">G</text>
<circle cx="548.5" cy="202.7" r="7" fill="#fff" stroke="#00ff00" stroke-width="1.3"/>
<text x="548.5" y="206" fill="#00ff00" font-size="9" text-anchor="middle">G1</text>
<circle cx="658.5" cy="202.7" r="7" fill="#fff" stroke="#00ff00" stroke-width="1.3"/>
<text x="658.5" y="206" fill="#00ff00" font-size="9" text-anchor="middle">H</text>
<circle cx="786" cy="202.7" r="10" fill="#fff" stroke="#00ff00" stroke-width="1.3"/>
<text x="786" y="206" fill="#00ff00" font-size="10" text-anchor="middle">Y&#8211;Y</text>
<circle cx="913.6" cy="202.7" r="7" fill="#fff" stroke="#00ff00" stroke-width="1.3"/>
<text x="913.6" y="206" fill="#00ff00" font-size="9" text-anchor="middle">H1</text>
<circle cx="1023.6" cy="202.7" r="7" fill="#fff" stroke="#00ff00" stroke-width="1.3"/>
<text x="1023.6" y="206" fill="#00ff00" font-size="9" text-anchor="middle">J</text>
<circle cx="1179" cy="202.7" r="7" fill="#fff" stroke="#00ff00" stroke-width="1.3"/>
<text x="1179" y="206" fill="#00ff00" font-size="9" text-anchor="middle">J1</text>
<circle cx="216.4" cy="351.2" r="7.5" fill="#fff" stroke="#00ff00" stroke-width="1.3"/>
<text x="216.4" y="354.7" fill="#00ff00" font-size="10" text-anchor="middle">10</text>
<circle cx="216.4" cy="458.2" r="7.5" fill="#fff" stroke="#00ff00" stroke-width="1.3"/>
<text x="216.4" y="461.7" fill="#00ff00" font-size="10" text-anchor="middle">11</text>
<circle cx="216.4" cy="539.3" r="7.5" fill="#fff" stroke="#00ff00" stroke-width="1.3"/>
<text x="216.4" y="542.8" fill="#00ff00" font-size="10" text-anchor="middle">12</text>
<circle cx="216.4" cy="610.4" r="7.5" fill="#fff" stroke="#00ff00" stroke-width="1.3"/>
<text x="216.4" y="613.9" fill="#00ff00" font-size="10" text-anchor="middle">13</text>
<circle cx="216.4" cy="697.2" r="7.5" fill="#fff" stroke="#00ff00" stroke-width="1.3"/>
<text x="216.4" y="700.7" fill="#00ff00" font-size="10" text-anchor="middle">14</text>
<circle cx="216.4" cy="790.3" r="7.5" fill="#fff" stroke="#00ff00" stroke-width="1.3"/>
<text x="216.4" y="793.8" fill="#00ff00" font-size="10" text-anchor="middle">15</text>
<circle cx="216.4" cy="885" r="7.5" fill="#fff" stroke="#00ff00" stroke-width="1.3"/>
<text x="216.4" y="888.5" fill="#00ff00" font-size="10" text-anchor="middle">16</text>
<circle cx="216.4" cy="934" r="7.5" fill="#fff" stroke="#00ff00" stroke-width="1.3"/>
<text x="216.4" y="937.5" fill="#00ff00" font-size="10" text-anchor="middle">17</text>
<path d="M579.7 254.5L597.7 268.5L579.7 282.5z" stroke="#ff0000" stroke-width="1" fill="#ff0000"/>
<circle cx="579.7" cy="268.5" r="11.5" fill="#fff" stroke="#ff0000" stroke-width="1.3"/>
<path d="M568.2 268.5L591.2 268.5" stroke="#ff0000" stroke-width="1" fill="none"/>
<text x="579.7" y="266.5" fill="#ffff00" font-size="9" text-anchor="middle">1</text>
<text x="579.7" y="275.5" fill="#ffff00" font-size="4" text-anchor="middle" font-weight="bold">BC604</text>
<path d="M798.5 254.5L780.5 268.5L798.5 282.5z" stroke="#ff0000" stroke-width="1" fill="#ff0000"/>
<circle cx="798.5" cy="268.5" r="11.5" fill="#fff" stroke="#ff0000" stroke-width="1.3"/>
<path d="M787 268.5L810 268.5" stroke="#ff0000" stroke-width="1" fill="none"/>
<text x="798.5" y="266.5" fill="#ffff00" font-size="9" text-anchor="middle">2</text>
<text x="798.5" y="275.5" fill="#ffff00" font-size="4" text-anchor="middle" font-weight="bold">BC604</text>
<path d="M1101.3 254.5L1119.3 268.5L1101.3 282.5z" stroke="#ff0000" stroke-width="1" fill="#ff0000"/>
<circle cx="1101.3" cy="268.5" r="11.5" fill="#fff" stroke="#ff0000" stroke-width="1.3"/>
<path d="M1089.8 268.5L1112.8 268.5" stroke="#ff0000" stroke-width="1" fill="none"/>
<text x="1101.3" y="266.5" fill="#ffff00" font-size="9" text-anchor="middle">3</text>
<text x="1101.3" y="275.5" fill="#ffff00" font-size="4" text-anchor="middle" font-weight="bold">BC604</text>
<path d="M579.7 1002.4L597.7 1016.4L579.7 1030.4z" stroke="#ff0000" stroke-width="1" fill="#ff0000"/>
<circle cx="579.7" cy="1016.4" r="11.5" fill="#fff" stroke="#ff0000" stroke-width="1.3"/>
<path d="M568.2 1016.4L591.2 1016.4" stroke="#ff0000" stroke-width="1" fill="none"/>
<text x="579.7" y="1014.4" fill="#ffff00" font-size="9" text-anchor="middle">1</text>
<text x="579.7" y="1023.4" fill="#ffff00" font-size="4" text-anchor="middle" font-weight="bold">BC604</text>
<path d="M798.5 1002.4L780.5 1016.4L798.5 1030.4z" stroke="#ff0000" stroke-width="1" fill="#ff0000"/>
<circle cx="798.5" cy="1016.4" r="11.5" fill="#fff" stroke="#ff0000" stroke-width="1.3"/>
<path d="M787 1016.4L810 1016.4" stroke="#ff0000" stroke-width="1" fill="none"/>
<text x="798.5" y="1014.4" fill="#ffff00" font-size="9" text-anchor="middle">2</text>
<text x="798.5" y="1023.4" fill="#ffff00" font-size="4" text-anchor="middle" font-weight="bold">BC604</text>
<path d="M1101.3 1002.4L1119.3 1016.4L1101.3 1030.4z" stroke="#ff0000" stroke-width="1" fill="#ff0000"/>
<circle cx="1101.3" cy="1016.4" r="11.5" fill="#fff" stroke="#ff0000" stroke-width="1.3"/>
<path d="M1089.8 1016.4L1112.8 1016.4" stroke="#ff0000" stroke-width="1" fill="none"/>
<text x="1101.3" y="1014.4" fill="#ffff00" font-size="9" text-anchor="middle">3</text>
<text x="1101.3" y="1023.4" fill="#ffff00" font-size="4" text-anchor="middle" font-weight="bold">BC604</text>
<path d="M268 629.5L283 612.5L298 629.5z" stroke="#ff0000" stroke-width="1" fill="#ff0000"/>
<circle cx="283" cy="630.5" r="11.5" fill="#fff" stroke="#ff0000" stroke-width="1.3"/>
<path d="M271.5 630.5L294.5 630.5" stroke="#ff0000" stroke-width="1" fill="none"/>
<text x="283" y="628.5" fill="#ffff00" font-size="9" text-anchor="middle">5</text>
<text x="283" y="637.5" fill="#ffff00" font-size="4" text-anchor="middle" font-weight="bold">BC604</text>
</g>
<g id="walls" shape-rendering="crispEdges">
<rect x="1181" y="402.4" width="47.4" height="527" fill="url(#hatch)"/>
<rect x="1181" y="396.4" width="47.4" height="6" fill="url(#conc)" stroke="#888" stroke-width="0.8"/>
<path d="M1186 403L1228 403" stroke="#ff00ff" stroke-width="1" fill="none"/>
<path d="M1184.8 403L1184.8 930" stroke="#ff00ff" stroke-width="1" fill="none" stroke-dasharray="6 2"/>
<rect x="1174.4" y="389.6" width="4.6" height="544.9" fill="url(#conc)"/>
<path d="M1174.4 389.6L1174.4 934.5" stroke="#ff00ff" stroke-width="1.2" fill="none"/>
<path d="M1179.8 396L1179.8 934" stroke="#e050d0" stroke-width="2" fill="none"/>
<path d="M1181.5 396L1181.5 402" stroke="#888" stroke-width="1" fill="none"/>
<rect x="1179.6" y="929.4" width="34.6" height="5.1" fill="url(#conc)" stroke="#ff00ff" stroke-width="1"/>
<rect x="1215.5" y="935.5" width="12.5" height="3" fill="#ff0000"/>
<path d="M1185 733.5L1228 733.5" stroke="#ffff00" stroke-width="1" fill="none"/>
<path d="M1185 535.2L1228 535.2" stroke="#ff0000" stroke-width="1" fill="none"/>
<path d="M1185 622.3L1228 622.3" stroke="#ff0000" stroke-width="1" fill="none"/>
<path d="M1185 697.2L1228 697.2" stroke="#ff0000" stroke-width="1" fill="none"/>
<path d="M1185 777L1228 777" stroke="#ff0000" stroke-width="1" fill="none"/>
<path d="M1181 388.7L1228 392.1" stroke="#00ff00" stroke-width="1.2" fill="none"/>
<path d="M1181 392L1228 395.5" stroke="#00ff00" stroke-width="1.2" fill="none"/>
<path d="M391 351L448.5 351L448.5 356.7L399.2 356.7L399.2 523L391 523z" stroke="#ff00ff" stroke-width="1" fill="url(#conc)"/>
<path d="M399.2 356.7L399.2 523" stroke="#888" stroke-width="1.2" fill="none"/>
<path d="M448.5 348L448.5 344.7L375.5 346.5L377.4 365L386.3 364.3L386.3 523" stroke="#00ff00" stroke-width="1.2" fill="none"/>
<path d="M448.5 347.5L379.7 350L380.5 361.7L389.7 361L389.7 520" stroke="#00ff00" stroke-width="1.2" fill="none"/>
<path d="M448.5 349.5L521.5 349.5" stroke="#ff0000" stroke-width="3" fill="none"/>
<path d="M448.5 356.7L522 356.7" stroke="#ff0000" stroke-width="1" fill="none"/>
<path d="M448.5 347.5L521.5 347.5" stroke="#ff0000" stroke-width="1" fill="none"/>
<path d="M393 342L525 327.5" stroke="#ff0000" stroke-width="1.2" fill="none"/>
<path d="M393 344.3L525 329.8" stroke="#ff0000" stroke-width="1" fill="none"/>
<path d="M1047.4 327.3L1179.2 341.8" stroke="#ff0000" stroke-width="1.2" fill="none"/>
<path d="M1050 330.5L1179.2 344.4" stroke="#ff0000" stroke-width="1" fill="none"/>
<path d="M522.4 351L522.4 356.7L535 356.7L535 340L587 337.5L587 333L528 335.5L528 351z" stroke="#ff00ff" stroke-width="1" fill="url(#conc)"/>
<path d="M522.4 347L522.4 330.2L587 326" stroke="#00ff00" stroke-width="1.2" fill="none"/>
<path d="M525.5 347L525.5 333L587 329.5" stroke="#00ff00" stroke-width="1.2" fill="none"/>
<path d="M587 331.5L624.4 330" stroke="#ff0000" stroke-width="3" fill="none"/>
<path d="M587 327.5L624.4 326" stroke="#ff0000" stroke-width="1" fill="none"/>
<path d="M589 338L624.4 336.5" stroke="#ff0000" stroke-width="1" fill="none"/>
<path d="M624.4 329L736.3 325.5L736.3 331L624.4 334.5z" stroke="#ff00ff" stroke-width="1" fill="url(#conc)"/>
<path d="M620 326.5L647 325L647 322.5L700 320.5L700 318.5L760 317.5" stroke="#00ff00" stroke-width="1.2" fill="none"/>
<path d="M624 328L736 324" stroke="#00ff00" stroke-width="1" fill="none"/>
<rect x="736.3" y="322.7" width="100.4" height="9.3" fill="none" stroke="#ff0000" stroke-width="1"/>
<path d="M738 325.5L835 325.5" stroke="#ff0000" stroke-width="2.5" fill="none"/>
<path d="M770 322.7L770 329" stroke="#ff0000" stroke-width="1" fill="none"/>
<path d="M802 322.7L802 329" stroke="#ff0000" stroke-width="1" fill="none"/>
<path d="M711 317V298Q786 289 861.4 298V317M716 317V301Q786 292 856 301V317M720 317V302M852 317V302" stroke="#0000ff" stroke-width="1.2" fill="none"/>
<path d="M716 300Q786 292 856 300M720 307H852M722 313H770M802 313H852" stroke="#909090" stroke-width="1" fill="none"/>
<path d="M706 317.5L867 317.5" stroke="#0000ff" stroke-width="1.4" fill="none"/>
<path d="M836.7 325.5L947.6 331L947.6 336.5L836.7 331z" stroke="#ff00ff" stroke-width="1" fill="url(#conc)"/>
<path d="M812 317.5L872 318.5L872 320.5L903 322L903 324L947 326.5" stroke="#00ff00" stroke-width="1.2" fill="none"/>
<path d="M836.7 323.5L947.6 329" stroke="#00ff00" stroke-width="1" fill="none"/>
<path d="M947.6 330L985.5 332.5" stroke="#ff0000" stroke-width="3" fill="none"/>
<path d="M945 325L985.5 327.5" stroke="#ff0000" stroke-width="1" fill="none"/>
<path d="M947.6 337L984 339.5" stroke="#ff0000" stroke-width="1" fill="none"/>
<path d="M984 333.3L1044 337L1044 351L1049.6 351L1049.6 357.2L1038.5 357.2L1038.5 341.7L984 338.3z" stroke="#ff00ff" stroke-width="1" fill="url(#conc)"/>
<path d="M984.7 325.6L1047.9 329.9L1050 349.5" stroke="#00ff00" stroke-width="1.2" fill="none"/>
<path d="M984.7 329L1044.5 333L1046.5 349.5" stroke="#00ff00" stroke-width="1.2" fill="none"/>
<path d="M1049.6 350L1123.8 350" stroke="#ff0000" stroke-width="3" fill="none"/>
<path d="M1049.6 357.2L1123.8 357.2" stroke="#ff0000" stroke-width="1" fill="none"/>
<path d="M1049.6 347.8L1123.8 347.8" stroke="#ff0000" stroke-width="1" fill="none"/>
<path d="M1123.8 352L1181 352L1181 363L1173.3 363L1173.3 357.2L1123.8 357.2z" stroke="#ff00ff" stroke-width="1" fill="url(#conc)"/>
<path d="M1123.8 345.2L1179 345.2" stroke="#00ff00" stroke-width="1.2" fill="none"/>
<path d="M1123.8 348.5L1179 348.5" stroke="#00ff00" stroke-width="1.2" fill="none"/>
<path d="M1179.2 344.4L1197.2 346.4L1194.6 365.3L1181.8 362.3" stroke="#00ff00" stroke-width="1.2" fill="none"/>
<path d="M1179.2 348L1193.5 349.8L1191.5 361L1182 359" stroke="#00ff00" stroke-width="1.2" fill="none"/>
<path d="M1181 363L1181 389.6" stroke="#ff0000" stroke-width="3" fill="none"/>
<path d="M1173.3 357L1173.3 390" stroke="#ff0000" stroke-width="1" fill="none"/>
<path d="M365.8 517Q355 573 349 629L354.5 629Q360.500 573 371.500 517z" fill="url(#conc)" stroke="#ff00ff" stroke-width="1"/>
<path d="M372.200 514V505.800L360.700 503.700Q348 566 341.500 629M364 507.500Q352 566 345 629" fill="none" stroke="#00ff00" stroke-width="1.2"/>
<rect x="369.7" y="514.5" width="17.1" height="3.5" fill="#ff0000"/>
<path d="M355.6 589.4L455.4 589.4L455.4 595.3L354.6 595.3z" stroke="#ff00ff" stroke-width="1" fill="url(#conc)"/>
<path d="M368.9 497L368.9 589" stroke="#888" stroke-width="1.2" fill="none"/>
<path d="M343 629L343 654.7" stroke="#ff0000" stroke-width="3" fill="none"/>
<path d="M348.5 629L348.5 655" stroke="#ff0000" stroke-width="1" fill="none"/>
<path d="M343.3 655L349 655L349 693L343.3 693z" stroke="#ff00ff" stroke-width="1" fill="url(#conc)"/>
<path d="M341 654.7L337.2 654.7L337.2 705.3L350 705.3L350 697" stroke="#00ff00" stroke-width="1.2" fill="none"/>
<path d="M340.5 658L340.5 702L346.5 702L346.5 697" stroke="#00ff00" stroke-width="1.2" fill="none"/>
<path d="M349 692L386.8 692" stroke="#ff0000" stroke-width="3" fill="none"/>
<path d="M349 696.9L386.8 696.9" stroke="#ff0000" stroke-width="1" fill="none"/>
<path d="M349 689.5L386.8 689.5" stroke="#ff0000" stroke-width="1" fill="none"/>
<rect x="386.8" y="690" width="92.9" height="6.9" fill="#ffffa0" stroke="#999" stroke-width="1"/>
<path d="M388 693.5L479 693.5" stroke="#ffff00" stroke-width="1.5" fill="none"/>
<path d="M422 695L484.8 695" stroke="#00ffff" stroke-width="1.2" fill="none"/>
<path d="M392.7 697L398.6 697L398.6 843.5L392.7 843.5z" stroke="#ff00ff" stroke-width="1" fill="url(#conc)"/>
<path d="M386.8 697L386.8 847.4" stroke="#00ff00" stroke-width="1.2" fill="none"/>
<path d="M390.1 697L390.1 844" stroke="#00ff00" stroke-width="1.2" fill="none"/>
<path d="M386.8 847.4L410.6 847.4" stroke="#00ff00" stroke-width="1.2" fill="none"/>
<path d="M390 844L399 844" stroke="#00ff00" stroke-width="1.2" fill="none"/>
<rect x="399" y="838.4" width="11.6" height="5.1" fill="#888"/>
<path d="M506.6 880.6L562.9 880.6L562.9 885.8L506.6 885.8z" stroke="#ff00ff" stroke-width="1" fill="url(#conc)"/>
<path d="M501.4 880.6L501.4 890.9L557.7 890.9L557.7 893.4" stroke="#00ff00" stroke-width="1.2" fill="none"/>
<path d="M562.9 887L602.5 887" stroke="#ff0000" stroke-width="3" fill="none"/>
<path d="M565 879.4L601 879.4" stroke="#ff0000" stroke-width="1" fill="none"/>
<path d="M557.7 893.4L607 893.4" stroke="#ff0000" stroke-width="1" fill="none"/>
<path d="M604.3 880.6L628.1 880.6L628.1 885.8L604.3 885.8z" stroke="#ff00ff" stroke-width="1" fill="url(#conc)"/>
<path d="M607 893.4L607 890.9L625.6 890.9L625.6 944L663.9 944L663.9 939.5L678 939.5L678 933" stroke="#00ff00" stroke-width="1.2" fill="none"/>
<path d="M628.5 890.9L628.5 940.5L660.5 940.5L660.5 936.5L674.5 936.5" stroke="#00ff00" stroke-width="1.2" fill="none"/>
<path d="M631.5 886L636.6 886L636.6 929.3L671.2 929.3L671.2 934.4L631.5 934.4z" stroke="#ff00ff" stroke-width="1" fill="url(#conc)"/>
<path d="M900.2 929.3L935.3 929.3L935.3 879.9L969.7 879.9L969.7 885.8L939.9 885.8L939.9 934.4L900.2 934.4z" stroke="#ff00ff" stroke-width="1" fill="url(#conc)"/>
<path d="M895.1 933L895.1 939.5L909.2 939.5L909.2 944L947.5 944L947.5 892.1L965.5 892.1L965.5 894.5" stroke="#00ff00" stroke-width="1.2" fill="none"/>
<path d="M898.5 936.5L912.5 936.5L912.5 940.5L944 940.5L944 889L967 889" stroke="#00ff00" stroke-width="1.2" fill="none"/>
<path d="M969.7 887L1008 887" stroke="#ff0000" stroke-width="3" fill="none"/>
<path d="M971 879.4L1006 879.4" stroke="#ff0000" stroke-width="1" fill="none"/>
<path d="M965.5 894.5L1012 894.5" stroke="#ff0000" stroke-width="1" fill="none"/>
<path d="M1008 880.6L1067 880.6L1067 885.8L1008 885.8z" stroke="#ff00ff" stroke-width="1" fill="url(#conc)"/>
<path d="M1012 894.5L1012 892.3L1070.8 892.3L1070.8 883" stroke="#00ff00" stroke-width="1.2" fill="none"/>
<path d="M1010 889L1067.5 889L1067.5 886" stroke="#00ff00" stroke-width="1.2" fill="none"/>
<path d="M1162.5 843L1162.5 885.9L1173.2 885.9L1173.2 944.7L1205.2 944.7L1205.2 941L1214 941L1214 936" stroke="#00ff00" stroke-width="1.2" fill="none"/>
<path d="M1165.5 843L1165.5 882.5L1176.5 882.5L1176.5 941L1202 941L1202 937.5L1211 937.5" stroke="#00ff00" stroke-width="1.2" fill="none"/>
<rect x="1163.5" y="838" width="10" height="5" fill="#999"/>
<rect x="657.4" y="335" width="9.1" height="122.8" fill="url(#conc2)"/>
<rect x="628.1" y="697" width="10.2" height="184" fill="url(#conc2)"/>
<rect x="628.1" y="689.5" width="61.9" height="8" fill="url(#conc2)"/>
<rect x="750.6" y="529.6" width="79.4" height="8.9" fill="url(#conc2)"/>
<rect x="750.6" y="513" width="22.4" height="17" fill="url(#conc2)"/>
<rect x="750" y="671.6" width="73" height="7.7" fill="url(#conc2)"/>
<circle cx="661.4" cy="335.5" r="8" fill="none" stroke="#ff0000" stroke-width="1.3"/>
<circle cx="632.5" cy="881.4" r="8" fill="none" stroke="#ff0000" stroke-width="1.3"/>
</g>
<g id="core">
<path d="M750.6 539.8L822.2 539.8L822.2 612L903.6 612L903.6 671.6L663.5 671.6L663.5 612L750.6 612z" stroke="None" stroke-width="0" fill="#031a24"/>
<rect x="742.4" y="564.6" width="8.2" height="34.1" fill="#fff"/>
<rect x="663" y="464" width="79.4" height="140" fill="#585858"/>
<path d="M656.6 457.4H750.6V611H656.6zM663 463.8V604.6H744.2V463.8z" fill="#d4d4dc" fill-rule="evenodd" stroke="#ff00ff" stroke-width="1"/>
<rect x="659.8" y="460.6" width="87.6" height="147.2" fill="none" stroke="#0000ff" stroke-width="2.2" stroke-dasharray="3.2 2.2" stroke-opacity=".85"/>
<rect x="742.4" y="564.6" width="8.2" height="34.1" fill="#fff"/>
<rect x="665.300" y="466" width="76.800" height="131.300" rx="37" fill="none" stroke="#a8a8a8" stroke-width="1.200"/>
<path d="M666.2 570L666.2 467L739.4 467L739.4 554.7" stroke="#ff0000" stroke-width="2.4" fill="none"/>
<rect x="695.9" y="497.5" width="13.7" height="67.5" fill="#585858" stroke="#ff0000" stroke-width="1.8"/>
<path d="M665.3 500.7L696 500.7" stroke="#00ffff" stroke-width="1.1" fill="none"/>
<path d="M709.6 500.7L738.6 500.7" stroke="#00ffff" stroke-width="1.1" fill="none"/>
<path d="M665.3 508.3L696 508.3" stroke="#00ffff" stroke-width="1.1" fill="none"/>
<path d="M709.6 508.3L738.6 508.3" stroke="#00ffff" stroke-width="1.1" fill="none"/>
<path d="M665.3 516L696 516" stroke="#00ffff" stroke-width="1.1" fill="none"/>
<path d="M709.6 516L738.6 516" stroke="#00ffff" stroke-width="1.1" fill="none"/>
<path d="M665.3 523.6L696 523.6" stroke="#00ffff" stroke-width="1.1" fill="none"/>
<path d="M709.6 523.6L738.6 523.6" stroke="#00ffff" stroke-width="1.1" fill="none"/>
<path d="M665.3 531.3L696 531.3" stroke="#00ffff" stroke-width="1.1" fill="none"/>
<path d="M709.6 531.3L738.6 531.3" stroke="#00ffff" stroke-width="1.1" fill="none"/>
<path d="M665.3 539L696 539" stroke="#00ffff" stroke-width="1.1" fill="none"/>
<path d="M709.6 539L738.6 539" stroke="#00ffff" stroke-width="1.1" fill="none"/>
<path d="M665.3 546.6L696 546.6" stroke="#00ffff" stroke-width="1.1" fill="none"/>
<path d="M709.6 546.6L738.6 546.6" stroke="#00ffff" stroke-width="1.1" fill="none"/>
<path d="M665.3 554.2L696 554.2" stroke="#00ffff" stroke-width="1.1" fill="none"/>
<path d="M665.3 561.9L696 561.9" stroke="#00ffff" stroke-width="1.1" fill="none"/>
<path d="M681.4 562L681.4 481.7L725.7 481.7L725.7 545.8" stroke="#00ffff" stroke-width="1.1" fill="none"/>
<path d="M698.3 464.5L698.3 565" stroke="#00ffff" stroke-width="1.1" fill="none"/>
<path d="M706.7 464.5L706.7 565" stroke="#00ffff" stroke-width="1.1" fill="none"/>
<path d="M664.5 545L698.3 524.9" stroke="#00ffff" stroke-width="1.1" fill="none"/>
<path d="M664.5 548L698.3 527.9" stroke="#00ffff" stroke-width="1.1" fill="none"/>
<path d="M678 531L685 539" stroke="#00ffff" stroke-width="1" fill="none"/>
<path d="M685 532L677 538" stroke="#00ffff" stroke-width="1" fill="none"/>
<path d="M722 543L725.7 546.5L729.5 543" stroke="#00ffff" stroke-width="1.1" fill="none"/>
<circle cx="681.4" cy="562.5" r="2" fill="none" stroke="#00ffff" stroke-width="1.1"/>
<text x="692.5" y="498" fill="#ffff00" font-size="3.8" text-anchor="middle" font-weight="bold">46</text>
<text x="706" y="498" fill="#ffff00" font-size="3.8" text-anchor="middle" font-weight="bold">48 47</text>
<text x="692.5" y="505.6" fill="#ffff00" font-size="3.8" text-anchor="middle" font-weight="bold">45</text>
<text x="713" y="505.6" fill="#ffff00" font-size="3.8" text-anchor="middle" font-weight="bold">48</text>
<text x="692.5" y="513.3" fill="#ffff00" font-size="3.8" text-anchor="middle" font-weight="bold">44</text>
<text x="713" y="513.3" fill="#ffff00" font-size="3.8" text-anchor="middle" font-weight="bold">49</text>
<text x="692.5" y="521" fill="#ffff00" font-size="3.8" text-anchor="middle" font-weight="bold">43</text>
<text x="713" y="521" fill="#ffff00" font-size="3.8" text-anchor="middle" font-weight="bold">50</text>
<text x="713" y="528.6" fill="#ffff00" font-size="3.8" text-anchor="middle" font-weight="bold">51</text>
<text x="692.5" y="536.2" fill="#ffff00" font-size="3.8" text-anchor="middle" font-weight="bold">56</text>
<text x="713" y="536.2" fill="#ffff00" font-size="3.8" text-anchor="middle" font-weight="bold">52</text>
<text x="692.5" y="543.9" fill="#ffff00" font-size="3.8" text-anchor="middle" font-weight="bold">57</text>
<text x="713" y="543.9" fill="#ffff00" font-size="3.8" text-anchor="middle" font-weight="bold">53</text>
<text x="692.5" y="551.5" fill="#ffff00" font-size="3.8" text-anchor="middle" font-weight="bold">58</text>
<text x="713" y="551.5" fill="#ffff00" font-size="3.8" text-anchor="middle" font-weight="bold">54</text>
<text x="692.5" y="559.2" fill="#ffff00" font-size="3.8" text-anchor="middle" font-weight="bold">59</text>
<text x="681.4" y="568" fill="#ffff00" font-size="3.2" text-anchor="middle" font-weight="bold">UP</text>
<text x="702.3" y="583" fill="#d8d830" font-size="5.2" text-anchor="middle" textLength="23" lengthAdjust="spacingAndGlyphs">STAIR 03</text>
<circle cx="736" cy="580.3" r="6.5" fill="#ff4500"/>
<rect x="828.9" y="542.4" width="76.1" height="62.6" fill="#fff"/>
<path d="M823 537.3H910V611H823zM829 543.3V605H904V543.3z" fill="#d4d4dc" fill-rule="evenodd" stroke="#ff00ff" stroke-width="1"/>
<rect x="826" y="540.3" width="81" height="67.7" fill="none" stroke="#0000ff" stroke-width="2" stroke-dasharray="3.2 2.2" stroke-opacity=".85"/>
<path d="M829 543L905 605" stroke="#a0a0a0" stroke-width="1" fill="none"/>
<path d="M829 605L905 543" stroke="#a0a0a0" stroke-width="1" fill="none"/>
<rect x="832.5" y="555.2" width="69.1" height="37.1" fill="#ffb87c" stroke="#ff0000" stroke-width="2"/>
<path d="M829 551L829 560" stroke="#ff0000" stroke-width="2" fill="none"/>
<path d="M829 588L829 597" stroke="#ff0000" stroke-width="2" fill="none"/>
<path d="M826 555.5L833 555.5" stroke="#ff0000" stroke-width="1.5" fill="none"/>
<path d="M826 592L833 592" stroke="#ff0000" stroke-width="1.5" fill="none"/>
<text x="867.8" y="576" fill="#ffff00" font-size="5" text-anchor="middle" font-weight="bold" textLength="40" lengthAdjust="spacingAndGlyphs">8 PERSON LIFT</text>
<ellipse cx="868" cy="596" rx="11" ry="3.200" fill="#fff" stroke="#ff0000" stroke-width="1.2"/>
<rect x="751.5" y="522" width="13.9" height="14" fill="#e080e0" stroke="#ff00ff" stroke-width="1"/>
<path d="M751.5 522L765.4 536" stroke="#0000ff" stroke-width="1.2" fill="none"/>
<path d="M751.5 536L765.4 522" stroke="#0000ff" stroke-width="1.2" fill="none"/>
<text x="758.5" y="531" fill="#0000ff" font-size="3" text-anchor="middle" font-weight="bold">RISER</text>
<path d="M659.2 612L659.2 672" stroke="#0000ff" stroke-width="3.2" fill="none" stroke-dasharray="5 2.500"/>
<path d="M907.2 612L907.2 672" stroke="#0000ff" stroke-width="3.2" fill="none" stroke-dasharray="5 2.500"/>
<path d="M826 548L826 606" stroke="#0000ff" stroke-width="3" fill="none" stroke-dasharray="5 2.500"/>
<path d="M746.5 566L746.5 612" stroke="#0000ff" stroke-width="3" fill="none" stroke-dasharray="5 2.500"/>
<rect x="659.6" y="674" width="87.4" height="20" fill="#fff"/>
<rect x="715.5" y="674.2" width="26.9" height="17.8" fill="#4a7a3a"/>
<path d="M656.6 671.6H750V697.2H656.6zM660 675V693.8H746.6V675z" fill="#d4d4dc" fill-rule="evenodd" stroke="#ff00ff" stroke-width="1"/>
<rect x="658.3" y="673.3" width="90" height="22.2" fill="none" stroke="#0000ff" stroke-width="1.4" stroke-dasharray="3.2 2.2" stroke-opacity=".85"/>
<path d="M663 675L680 693" stroke="#0000ff" stroke-width="1.1" fill="none"/>
<path d="M663 693L680 675" stroke="#0000ff" stroke-width="1.1" fill="none"/>
<path d="M684 675L702 693" stroke="#0000ff" stroke-width="1.1" fill="none"/>
<path d="M684 693L702 675" stroke="#0000ff" stroke-width="1.1" fill="none"/>
<path d="M715.5 675L742.4 693" stroke="#0000ff" stroke-width="1.1" fill="none"/>
<path d="M715.5 693L742.4 675" stroke="#0000ff" stroke-width="1.1" fill="none"/>
<rect x="826" y="674" width="81" height="20" fill="#fff"/>
<rect x="830" y="674.2" width="26.3" height="17.8" fill="#4a7a3a"/>
<path d="M823 671.6H910V697.2H823zM826.4 675V693.8H906.6V675z" fill="#d4d4dc" fill-rule="evenodd" stroke="#ff00ff" stroke-width="1"/>
<rect x="824.7" y="673.3" width="83.6" height="22.2" fill="none" stroke="#0000ff" stroke-width="1.4" stroke-dasharray="3.2 2.2" stroke-opacity=".85"/>
<path d="M830 675L856.3 693" stroke="#0000ff" stroke-width="1.1" fill="none"/>
<path d="M830 693L856.3 675" stroke="#0000ff" stroke-width="1.1" fill="none"/>
<path d="M870 675L890 693" stroke="#0000ff" stroke-width="1.1" fill="none"/>
<path d="M870 693L890 675" stroke="#0000ff" stroke-width="1.1" fill="none"/>
<path d="M893 675L906 693" stroke="#0000ff" stroke-width="1.1" fill="none"/>
<path d="M893 693L906 675" stroke="#0000ff" stroke-width="1.1" fill="none"/>
<path d="M681 674L681 694" stroke="#ff00ff" stroke-width="1.2" fill="none"/>
<path d="M703.5 674L703.5 694" stroke="#ff00ff" stroke-width="1.2" fill="none"/>
<path d="M709 674L709 694" stroke="#00ff00" stroke-width="1.2" fill="none"/>
<path d="M866 674L866 694" stroke="#ff00ff" stroke-width="1.2" fill="none"/>
<path d="M889 674L889 694" stroke="#00ff00" stroke-width="1.2" fill="none"/>
<path d="M892 674L892 694" stroke="#ff00ff" stroke-width="1.2" fill="none"/>
<text x="671" y="687" fill="#0000ff" font-size="2.6" text-anchor="middle" font-weight="bold">WATER</text>
<text x="693" y="687" fill="#0000ff" font-size="2.6" text-anchor="middle" font-weight="bold">ELEC CUP</text>
<text x="729" y="686" fill="#0000ff" font-size="2.6" text-anchor="middle" font-weight="bold">SMOKE VENT</text>
<text x="843" y="686" fill="#0000ff" font-size="2.6" text-anchor="middle" font-weight="bold">SMOKE VENT</text>
<text x="880" y="687" fill="#0000ff" font-size="2.6" text-anchor="middle" font-weight="bold">ELEC CUP</text>
<text x="900" y="687" fill="#0000ff" font-size="2.6" text-anchor="middle" font-weight="bold">WATER</text>
<rect x="750" y="679.3" width="73" height="17.9" fill="#fff"/>
<path d="M750 697.2L823 697.2" stroke="#ffff00" stroke-width="1.2" fill="none"/>
<text x="786" y="692" fill="#ffff00" font-size="5.2" text-anchor="middle" textLength="42" lengthAdjust="spacingAndGlyphs">FAN COIL UNIT</text>
<path d="M665.5 672.5A6.500 6.500 0 0 1 678.5 672.5L672 679z" fill="#ff4500"/>
<path d="M688.5 672.5A6.500 6.500 0 0 1 701.5 672.5L695 679z" fill="#ff4500"/>
<path d="M719.2 672.5A6.500 6.500 0 0 1 732.2 672.5L725.7 679z" fill="#ff4500"/>
<path d="M840.8 672.5A6.500 6.500 0 0 1 853.8 672.5L847.3 679z" fill="#ff4500"/>
<path d="M871.5 672.5A6.500 6.500 0 0 1 884.5 672.5L878 679z" fill="#ff4500"/>
<path d="M890.7 672.5A6.500 6.500 0 0 1 903.7 672.5L897.2 679z" fill="#ff4500"/>
<path d="M663.5 672.3L750 672.3" stroke="#00ffff" stroke-width="1.2" fill="none"/>
<path d="M823 672.3L903.6 672.3" stroke="#00ffff" stroke-width="1.2" fill="none"/>
<path d="M786.2 539.8L786.2 671.6" stroke="#ff0000" stroke-width="1.2" fill="none"/>
<path d="M798.5 539.8L798.5 671.6" stroke="#d8d820" stroke-width="1.2" fill="none"/>
<path d="M663.5 630.5L903.6 630.5" stroke="#d8d820" stroke-width="1.2" fill="none"/>
<path d="M746.2 564.6L782 564.6" stroke="#00ffff" stroke-width="1.2" fill="none"/>
<path d="M782 564.600A35 35 0 0 1 750.600 599" fill="none" stroke="#9a9a9a" stroke-width="1.100"/>
<path d="M745 581L768 581L768 624.3L660 637" stroke="#b414e6" stroke-width="2.6" fill="none" stroke-dasharray="9 4" stroke-linejoin="round"/>
<path d="M773 583L842.2 636.6L905 636.6" stroke="#b414e6" stroke-width="2.6" fill="none" stroke-dasharray="9 4"/>
<text x="723.5" y="641" fill="#ffff00" font-size="5.6" text-anchor="middle" transform="rotate(-7 723.5 641)" textLength="56" lengthAdjust="spacingAndGlyphs">ESCAPE DIST. 5.7m</text>
<text x="808" y="624" fill="#ffff00" font-size="5.6" text-anchor="middle" transform="rotate(37.7 808 624)" textLength="57" lengthAdjust="spacingAndGlyphs">ESCAPE DIST. 5.9m</text>
<text x="771.5" y="634.5" fill="#a8a828" font-size="4.6" text-anchor="middle">LOBBY</text>
<text x="771.5" y="640.5" fill="#0000ff" font-size="3.6" text-anchor="middle" font-weight="bold">9mm</text>
<path d="M672 641L665 647.5L672 654z" stroke="#ffff00" stroke-width="1.6" fill="none"/>
<text x="680" y="651.5" fill="#ffff00" font-size="9" text-anchor="middle" font-weight="bold" textLength="15" lengthAdjust="spacingAndGlyphs">B10</text>
<path d="M893 641L900 647.5L893 654z" stroke="#ffff00" stroke-width="1.6" fill="none"/>
<text x="885" y="651" fill="#ffff00" font-size="8" text-anchor="middle" font-weight="bold" textLength="9" lengthAdjust="spacingAndGlyphs">B9</text>
<path d="M715 667A8 8 0 0 1 713 655A8 8 0 0 1 722 648A8 8 0 0 1 735 645A8 8 0 0 1 749 647A8 8 0 0 1 762 651A8 8 0 0 1 774 653A8 8 0 0 1 786 652A8 8 0 0 1 798 653A8 8 0 0 1 811 655A8 8 0 0 1 824 654A8 8 0 0 1 838 655A8 8 0 0 1 850 658A8 8 0 0 1 862 663A8 8 0 0 1 872 668" fill="none" stroke="#0000ff" stroke-width="1.2"/>
<path d="M875.9 698A8 8 0 0 1 872 706A8 8 0 0 1 862 711A8 8 0 0 1 850 713A8 8 0 0 1 838 714A8 8 0 0 1 824 715A8 8 0 0 1 811 715A8 8 0 0 1 798 716A8 8 0 0 1 786 716A8 8 0 0 1 774 716A8 8 0 0 1 762 715A8 8 0 0 1 749 714A8 8 0 0 1 735 712A8 8 0 0 1 722 709A8 8 0 0 1 711 705A8 8 0 0 1 704.4 698" fill="none" stroke="#0000ff" stroke-width="1.2"/>
<rect x="755.7" y="473.3" width="50.7" height="16.7" rx="8" fill="#fff" stroke="#ff0000" stroke-width="1.2"/>
<path d="M758 482L804 482" stroke="#ff0000" stroke-width="1" fill="none"/>
<text x="781" y="480.8" fill="#ffff00" font-size="7.5" text-anchor="middle" textLength="22" lengthAdjust="spacingAndGlyphs">STAIR</text>
<text x="781" y="488" fill="#ff0000" font-size="3.4" text-anchor="middle" font-weight="bold" textLength="40" lengthAdjust="spacingAndGlyphs">KSR-SJP-B400</text>
</g>
<g id="interior" shape-rendering="crispEdges">
<path d="M552 454L590.4 454L590.4 590.7L652.8 590.7L652.8 685L637 685L637 672L552 672z" stroke="#ff4500" stroke-width="3.6" fill="none" stroke-dasharray="5 2.500" stroke-linejoin="miter"/>
<path d="M862 470.2L993.6 470.2L993.6 523.2L1012.8 523.2L1012.8 689.6L915.5 689.6L915.5 594.8L964.1 594.8L964.1 508.6L911.7 508.6L911.7 532.1L862 532.1z" stroke="#ff4500" stroke-width="3.6" fill="none" stroke-dasharray="5 2.500" stroke-linejoin="miter"/>
<path d="M571.8 456L571.8 590.2L660 636.2" stroke="#0c2014" stroke-width="2.2" fill="none" stroke-dasharray="12 5"/>
<path d="M859.2 487.4L975.7 499.4L975.7 606.4L911.7 637" stroke="#0c2014" stroke-width="2.2" fill="none" stroke-dasharray="12 5"/>
<text x="569.5" y="555.5" fill="#ffff00" font-size="5" text-anchor="middle" font-weight="bold" transform="rotate(-90 569.5 555.5)" textLength="56" lengthAdjust="spacingAndGlyphs">TRAVEL DIST. 7.5m</text>
<text x="983" y="570.5" fill="#ffff00" font-size="5" text-anchor="middle" font-weight="bold" transform="rotate(-90 983 570.5)" textLength="57" lengthAdjust="spacingAndGlyphs">TRAVEL DIST. 6.4m</text>
<circle cx="571.3" cy="444.5" r="6.3" fill="#ffb400"/>
<circle cx="542.3" cy="471.4" r="6.3" fill="#ffb400"/>
<circle cx="542.3" cy="519" r="6.3" fill="#ffb400"/>
<circle cx="599.9" cy="563.3" r="6.3" fill="#ffb400"/>
<circle cx="542.3" cy="573.6" r="6.3" fill="#ffb400"/>
<circle cx="542.3" cy="641.9" r="6.3" fill="#ffb400"/>
<circle cx="588.4" cy="686.6" r="6.3" fill="#ffb400"/>
<circle cx="898.3" cy="459.5" r="6.3" fill="#ffb400"/>
<circle cx="938.5" cy="459.5" r="6.3" fill="#ffb400"/>
<circle cx="850.2" cy="489.4" r="6.3" fill="#ffb400"/>
<circle cx="1004.6" cy="488.1" r="6.3" fill="#ffb400"/>
<circle cx="955.2" cy="552.1" r="6.3" fill="#ffb400"/>
<circle cx="1025.6" cy="649.4" r="6.3" fill="#ffb400"/>
<circle cx="987.4" cy="701.2" r="6.3" fill="#ffb400"/>
<circle cx="642.6" cy="640.6" r="6.5" fill="#ff4500"/>
<circle cx="923.2" cy="640.9" r="6.5" fill="#ff4500"/>
<path d="M522.4 356.7L522.4 447.3" stroke="#ff0000" stroke-width="1" fill="none"/>
<path d="M541 356.7L541 447.3" stroke="#c09090" stroke-width="1.2" fill="none"/>
<rect x="542.3" y="340" width="2.5" height="107.3" fill="#ffffa8" stroke="#a0a080" stroke-width="0.8"/>
<path d="M563.2 340L563.2 419.5" stroke="#ff0000" stroke-width="1" fill="none"/>
<rect x="544.6" y="416" width="18.6" height="3.5" fill="#ffffa8" stroke="#a0a080" stroke-width="0.8"/>
<rect x="522.4" y="447.3" width="36" height="3.7" fill="#ffffa8" stroke="#999" stroke-width="0.8"/>
<text x="529" y="422" fill="#ff0000" font-size="3.2" text-anchor="middle" font-weight="bold" transform="rotate(-90 529 422)">WARDROBE</text>
<text x="559" y="383" fill="#ff0000" font-size="3.2" text-anchor="middle" font-weight="bold" transform="rotate(-90 559 383)">WARDROBE</text>
<text x="534" y="405" fill="#ff0000" font-size="3.4" text-anchor="middle" font-weight="bold">2.4</text>
<text x="554" y="383" fill="#ff0000" font-size="3.4" text-anchor="middle" font-weight="bold">2.4</text>
<rect x="545.5" y="451" width="3.5" height="239" fill="#ffffa8" stroke="#a0a080" stroke-width="0.8"/>
<rect x="593.5" y="454" width="3" height="136" fill="#ffffa8" stroke="#a0a080" stroke-width="0.8"/>
<rect x="546" y="447.3" width="6" height="6.7" fill="#ffffa8" stroke="#a0a080" stroke-width="0.8"/>
<path d="M558.4 421.7L558.4 448" stroke="#00ffff" stroke-width="1.3" fill="none"/>
<path d="M558.4 421.7A26.3 26.3 0 0 1 584.7 448" fill="none" stroke="#9a9a9a" stroke-width="1.1"/>
<path d="M549 487L519 487" stroke="#00ffff" stroke-width="1.3" fill="none"/>
<path d="M519 487A30 30 0 0 1 549 457" fill="none" stroke="#9a9a9a" stroke-width="1.1"/>
<path d="M519 487L549 487" stroke="#00ffff" stroke-width="1.3" fill="none"/>
<rect x="596.5" y="514" width="59.5" height="3" fill="#ffffa8" stroke="#a0a080" stroke-width="0.8"/>
<rect x="596.5" y="540" width="59.5" height="3.5" fill="#ffffa8" stroke="#a0a080" stroke-width="0.8"/>
<rect x="596.5" y="586.9" width="59.5" height="3.1" fill="#ffffa8" stroke="#a0a080" stroke-width="0.8"/>
<rect x="598.6" y="517.5" width="52.4" height="20.8" rx="10" fill="none" stroke="#ff0000" stroke-width="1.1"/>
<rect x="606" y="520.500" width="37" height="14.500" rx="7" fill="none" stroke="#a0a0a0" stroke-width="1"/>
<path d="M601 452.6L601 474.3" stroke="#00ffff" stroke-width="1.3" fill="none"/>
<path d="M623 452.6A22 22 0 0 1 601 474.6" fill="none" stroke="#9a9a9a" stroke-width="1.1"/>
<rect x="629" y="456" width="25" height="27" fill="none" stroke="#ff0000" stroke-width="1.1"/>
<ellipse cx="636" cy="466" rx="6" ry="5" fill="none" stroke="#ff0000" stroke-width="1.1"/>
<rect x="634" y="488" width="20" height="24" fill="none" stroke="#ff0000" stroke-width="1.1"/>
<rect x="598" y="488" width="4" height="22" fill="none" stroke="#ff0000" stroke-width="1"/>
<text x="618" y="487" fill="#ffff00" font-size="4.4" text-anchor="middle" textLength="28" lengthAdjust="spacingAndGlyphs">BATHROOM</text>
<text x="617" y="493.5" fill="#ffff00" font-size="4.4" text-anchor="middle" textLength="24" lengthAdjust="spacingAndGlyphs">TYPE 14a</text>
<text x="611" y="498" fill="#0000ff" font-size="3.2" text-anchor="middle" font-weight="bold">9mm</text>
<text x="615" y="507.5" fill="#ff0000" font-size="3.4" text-anchor="middle" font-weight="bold">4.5sqm</text>
<text x="636" y="558.5" fill="#ffff00" font-size="4.6" text-anchor="middle">STORE</text>
<text x="636" y="563" fill="#0000ff" font-size="3.2" text-anchor="middle" font-weight="bold">9mm</text>
<path d="M569 552.3L596 552.3" stroke="#00ffff" stroke-width="1.3" fill="none"/>
<path d="M596 578.3A26 26 0 0 1 570 552.3" fill="none" stroke="#9a9a9a" stroke-width="1.1"/>
<text x="596" y="625.5" fill="#ffff00" font-size="4.6" text-anchor="middle">LOBBY</text>
<text x="596" y="630" fill="#0000ff" font-size="3.2" text-anchor="middle" font-weight="bold">9mm</text>
<text x="596" y="640" fill="#ff0000" font-size="3.4" text-anchor="middle" font-weight="bold">15.4sqm</text>
<path d="M549 505L572 505" stroke="#00ffff" stroke-width="1.3" fill="none"/>
<path d="M572 505A23 23 0 0 1 549 528" fill="none" stroke="#9a9a9a" stroke-width="1.1"/>
<path d="M549 561L519 561" stroke="#00ffff" stroke-width="1.3" fill="none"/>
<path d="M549 591A30 30 0 0 1 519 561" fill="none" stroke="#9a9a9a" stroke-width="1.1"/>
<path d="M549 628.6L519 628.6" stroke="#00ffff" stroke-width="1.3" fill="none"/>
<path d="M549 658.6A30 30 0 0 1 519 628.6" fill="none" stroke="#9a9a9a" stroke-width="1.1"/>
<path d="M626.7 617.6L660 617.6" stroke="#00ffff" stroke-width="1.2" fill="none"/>
<path d="M654.3 650.1A33 33 0 0 1 627 617.6" fill="none" stroke="#9a9a9a" stroke-width="1.1"/>
<path d="M644.7 666L660 666" stroke="#00ffff" stroke-width="1.2" fill="none"/>
<path d="M644 666A16 16 0 0 1 654.5 651" fill="none" stroke="#9a9a9a" stroke-width="1.1"/>
<path d="M564.9 690L564.9 704.8" stroke="#00ffff" stroke-width="1.3" fill="none"/>
<path d="M613.5 690L613.5 704.8" stroke="#00ffff" stroke-width="1.3" fill="none"/>
<path d="M564.900 705A24 16 0 0 0 588.500 690M613.500 705A24 16 0 0 1 589.500 690" fill="none" stroke="#9a9a9a" stroke-width="1.100"/>
<rect x="552" y="686" width="10" height="4.5" fill="#ffffa8" stroke="#a0a080" stroke-width="0.8"/>
<rect x="616" y="686" width="20" height="4.5" fill="#ffffa8" stroke="#a0a080" stroke-width="0.8"/>
<rect x="543" y="541" width="5.6" height="19" fill="url(#conc)" stroke="#ff00ff" stroke-width="1"/>
<rect x="543" y="587" width="5.6" height="24" fill="url(#conc)" stroke="#ff00ff" stroke-width="1"/>
<rect x="543" y="665" width="5.6" height="32" fill="url(#conc)" stroke="#ff00ff" stroke-width="1"/>
<rect x="368.9" y="496.8" width="3.1" height="89.2" fill="#ffffa8" stroke="#a0a080" stroke-width="0.8"/>
<rect x="368.9" y="496.8" width="31.1" height="3.2" fill="#ffffa8" stroke="#a0a080" stroke-width="0.8"/>
<rect x="436" y="496.8" width="44" height="3.2" fill="#ffffa8" stroke="#a0a080" stroke-width="0.8"/>
<rect x="477" y="496.8" width="3.5" height="93.2" fill="#ffffa8" stroke="#a0a080" stroke-width="0.8"/>
<rect x="375.5" y="530.6" width="21.5" height="49.9" rx="9" fill="none" stroke="#ff0000" stroke-width="1.1"/>
<rect x="381" y="536" width="10.500" height="36" rx="5" fill="none" stroke="#ff0000" stroke-width="1"/>
<rect x="443" y="500.5" width="33" height="30.5" fill="none" stroke="#ff0000" stroke-width="1.1"/>
<path d="M443 540L465 529" stroke="#ff0000" stroke-width="1.4" fill="none"/>
<path d="M401 524L401 585" stroke="#ff0000" stroke-width="1" fill="none"/>
<path d="M442 500L442 586" stroke="#aaa" stroke-width="1" fill="none"/>
<rect x="413" y="565" width="17" height="20" fill="none" stroke="#ff0000" stroke-width="1.1"/>
<rect x="411" y="580" width="21" height="6" fill="none" stroke="#ff0000" stroke-width="1.1"/>
<ellipse cx="462" cy="566" rx="5" ry="7" fill="none" stroke="#ff0000" stroke-width="1.1"/>
<rect x="448" y="575" width="28" height="11" fill="none" stroke="#ff0000" stroke-width="1"/>
<path d="M412 497L412 523" stroke="#00ffff" stroke-width="1.3" fill="none"/>
<path d="M412 523A26 26 0 0 1 386 497" fill="none" stroke="#9a9a9a" stroke-width="1.1"/>
<path d="M410.5 498L410.5 523" stroke="#00ffff" stroke-width="1.3" fill="none"/>
<text x="428" y="539" fill="#ffff00" font-size="4.4" text-anchor="middle" textLength="30" lengthAdjust="spacingAndGlyphs">BATHROOM</text>
<text x="419" y="545" fill="#ffff00" font-size="4.4" text-anchor="middle" textLength="20" lengthAdjust="spacingAndGlyphs">TYPE 05</text>
<text x="421" y="549.5" fill="#0000ff" font-size="3.2" text-anchor="middle" font-weight="bold">30mm</text>
<text x="421" y="560" fill="#ff0000" font-size="3.4" text-anchor="middle" font-weight="bold">6.4sqm</text>
<path d="M434 547.5L441 547.5" stroke="#00ffff" stroke-width="1" fill="none"/>
<rect x="481" y="498" width="66" height="3" fill="#ffffa8" stroke="#a0a080" stroke-width="0.8"/>
<rect x="481" y="546" width="64" height="3.5" fill="#ffffa8" stroke="#a0a080" stroke-width="0.8"/>
<rect x="481" y="590" width="64" height="3" fill="#ffffa8" stroke="#a0a080" stroke-width="0.8"/>
<rect x="479.5" y="590" width="4.5" height="31" fill="#ffffa8" stroke="#a0a080" stroke-width="0.8"/>
<rect x="484" y="502" width="9" height="24" fill="none" stroke="#ff0000" stroke-width="1.1"/>
<ellipse cx="501" cy="515" rx="5" ry="6" fill="none" stroke="#ff0000" stroke-width="1.1"/>
<rect x="511" y="504" width="29" height="23" fill="#a8a8a8"/>
<text x="525" y="521" fill="#0000ff" font-size="3.4" text-anchor="middle" font-weight="bold">STACK</text>
<rect x="516" y="507" width="31" height="5" fill="#ffe000"/>
<rect x="484" y="531" width="9" height="14" fill="none" stroke="#ff0000" stroke-width="1.1"/>
<rect x="511" y="533" width="17" height="13" fill="none" stroke="#ff0000" stroke-width="1.1"/>
<path d="M493 539L540 539" stroke="#ff0000" stroke-width="1" fill="none"/>
<text x="528" y="531.5" fill="#ff0000" font-size="3.2" text-anchor="middle" font-weight="bold">2.5sqm</text>
<rect x="483" y="552" width="16" height="16" fill="none" stroke="#ff0000" stroke-width="1"/>
<path d="M483 552L499 568" stroke="#ff0000" stroke-width="1" fill="none"/>
<path d="M483 568L499 552" stroke="#ff0000" stroke-width="1" fill="none"/>
<rect x="483" y="572" width="16" height="18" fill="none" stroke="#ff0000" stroke-width="1.1"/>
<rect x="486" y="575" width="10" height="12" fill="none" stroke="#ff0000" stroke-width="1"/>
<circle cx="491" cy="581" r="1.5" fill="#ff0000"/>
<text x="511" y="573.5" fill="#ffff00" font-size="4.4" text-anchor="middle" textLength="18" lengthAdjust="spacingAndGlyphs">UTILITY</text>
<text x="511" y="578" fill="#0000ff" font-size="3.2" text-anchor="middle" font-weight="bold">30mm</text>
<text x="509" y="587" fill="#ff0000" font-size="3.2" text-anchor="middle" font-weight="bold">2.8sqm</text>
<path d="M545 531L521 531" stroke="#00ffff" stroke-width="1.3" fill="none"/>
<path d="M545 555A24 24 0 0 1 521 531" fill="none" stroke="#9a9a9a" stroke-width="1.1"/>
<path d="M521 561L545 561" stroke="#00ffff" stroke-width="1.2" fill="none"/>
<rect x="397" y="597" width="27.7" height="16.2" fill="none" stroke="#ff0000" stroke-width="1.1"/>
<circle cx="402" cy="601.5" r="2.6" fill="none" stroke="#ff0000" stroke-width="1"/>
<circle cx="402" cy="609" r="2.6" fill="none" stroke="#ff0000" stroke-width="1"/>
<circle cx="411" cy="601.5" r="2.6" fill="none" stroke="#ff0000" stroke-width="1"/>
<circle cx="411" cy="609" r="2.6" fill="none" stroke="#ff0000" stroke-width="1"/>
<circle cx="420" cy="601.5" r="2.6" fill="none" stroke="#ff0000" stroke-width="1"/>
<circle cx="420" cy="609" r="2.6" fill="none" stroke="#ff0000" stroke-width="1"/>
<rect x="485.5" y="597" width="18.5" height="18" fill="none" stroke="#ff0000" stroke-width="1"/>
<path d="M485.5 597L504 615" stroke="#ff0000" stroke-width="1" fill="none"/>
<path d="M485.5 615L504 597" stroke="#ff0000" stroke-width="1" fill="none"/>
<rect x="504" y="597" width="18" height="18" fill="none" stroke="#ff0000" stroke-width="1"/>
<path d="M504 597L522 615" stroke="#ff0000" stroke-width="1" fill="none"/>
<path d="M504 615L522 597" stroke="#ff0000" stroke-width="1" fill="none"/>
<rect x="522" y="597" width="19" height="18" fill="none" stroke="#ff0000" stroke-width="1"/>
<path d="M522 597L541 615" stroke="#ff0000" stroke-width="1" fill="none"/>
<path d="M522 615L541 597" stroke="#ff0000" stroke-width="1" fill="none"/>
<path d="M372 615L486 615" stroke="#ff0000" stroke-width="1" fill="none"/>
<path d="M372 615L372 690" stroke="#ff0000" stroke-width="1" fill="none"/>
<path d="M354 615L354 690" stroke="#ff0000" stroke-width="1" fill="none"/>
<rect x="356.9" y="639.8" width="14" height="24.6" rx="2" fill="none" stroke="#ff0000" stroke-width="1.1"/>
<rect x="358.5" y="642" width="10.5" height="10" rx="1.5" fill="none" stroke="#ff0000" stroke-width="1"/>
<rect x="358.5" y="654" width="10.5" height="9" rx="1.5" fill="none" stroke="#ff0000" stroke-width="1"/>
<circle cx="364" cy="647" r="1.3" fill="#ff0000"/>
<circle cx="364" cy="658.5" r="1.3" fill="#ff0000"/>
<rect x="447.2" y="646.5" width="28.6" height="43.5" fill="none" stroke="#ff0000" stroke-width="1.1"/>
<text x="461.5" y="659" fill="#ff0000" font-size="3.1" text-anchor="middle" font-weight="bold">PENINSULA</text>
<text x="461.5" y="663.5" fill="#ff0000" font-size="3.1" text-anchor="middle" font-weight="bold">WORKTOP</text>
<rect x="403" y="644.5" width="23" height="4" fill="#ffff00"/>
<text x="414" y="653.5" fill="#0000ff" font-size="3.2" text-anchor="middle" font-weight="bold">30mm</text>
<text x="414" y="663.5" fill="#ff0000" font-size="3.4" text-anchor="middle" font-weight="bold">18.5sqm</text>
<path d="M483 695L483 709L487 709" stroke="#ff0000" stroke-width="1" fill="none"/>
<text x="488.7" y="710.5" fill="#ffff00" font-size="3.6" text-anchor="start" font-weight="bold">Sliding door</text>
<rect x="666.5" y="337.8" width="63.5" height="2.7" fill="#ffffa8" stroke="#a0a080" stroke-width="0.8"/>
<rect x="726" y="338" width="3.5" height="32" fill="#ffffa8" stroke="#a0a080" stroke-width="0.8"/>
<rect x="726" y="397.5" width="3.5" height="56.9" fill="#ffffa8" stroke="#a0a080" stroke-width="0.8"/>
<rect x="668" y="427.5" width="29" height="3.5" fill="#ffffa8" stroke="#a0a080" stroke-width="0.8"/>
<rect x="693.5" y="430" width="3.5" height="24.4" fill="#ffffa8" stroke="#a0a080" stroke-width="0.8"/>
<rect x="666.5" y="338" width="3" height="119" fill="#ffffa8" stroke="#a0a080" stroke-width="0.8"/>
<rect x="670.5" y="342.6" width="54.5" height="24.6" rx="11" fill="none" stroke="#ff0000" stroke-width="1.1"/>
<rect x="680" y="346.500" width="34" height="16.500" rx="8" fill="none" stroke="#a0a0a0" stroke-width="1"/>
<rect x="669" y="371" width="19" height="21" fill="none" stroke="#ff0000" stroke-width="1.1"/>
<rect x="673" y="375" width="13" height="13" fill="none" stroke="#ff0000" stroke-width="1"/>
<rect x="669" y="398" width="10" height="30" fill="none" stroke="#ff0000" stroke-width="1.1"/>
<ellipse cx="689" cy="414.500" rx="7.500" ry="5.500" fill="none" stroke="#ff0000" stroke-width="1.1"/>
<rect x="672" y="403" width="8" height="23" fill="none" stroke="#bbb" stroke-width="1"/>
<path d="M700 371.5L726 371.5" stroke="#00ffff" stroke-width="1.3" fill="none"/>
<path d="M726 397.5A26 26 0 0 1 700 371.5" fill="none" stroke="#9a9a9a" stroke-width="1.1"/>
<rect x="697" y="430" width="28" height="24" fill="none" stroke="#ff0000" stroke-width="1.1"/>
<path d="M699 421L722 432" stroke="#ff0000" stroke-width="1.6" fill="none"/>
<path d="M700 432A22 22 0 0 1 722 410" fill="none" stroke="#bbb" stroke-width="1.1"/>
<rect x="721" y="403" width="4" height="22" fill="none" stroke="#ff0000" stroke-width="1.1"/>
<circle cx="721" cy="442" r="1.6" fill="#ff0000"/>
<text x="708" y="391.5" fill="#ffff00" font-size="4.4" text-anchor="middle" textLength="34" lengthAdjust="spacingAndGlyphs">BATHROOM M2</text>
<text x="704" y="397" fill="#ffff00" font-size="4.4" text-anchor="middle" textLength="24" lengthAdjust="spacingAndGlyphs">TYPE 14.3</text>
<text x="700" y="401" fill="#0000ff" font-size="3.2" text-anchor="middle" font-weight="bold">9mm</text>
<rect x="854.7" y="333" width="3.3" height="137" fill="#ffffa8" stroke="#a0a080" stroke-width="0.8"/>
<rect x="854.7" y="335" width="62.6" height="3" fill="#ffffa8" stroke="#a0a080" stroke-width="0.8"/>
<rect x="914" y="335" width="3.3" height="29" fill="#ffffa8" stroke="#a0a080" stroke-width="0.8"/>
<rect x="914" y="392" width="3.3" height="74" fill="#ffffa8" stroke="#a0a080" stroke-width="0.8"/>
<rect x="858" y="360" width="19" height="3" fill="#ffffa8" stroke="#a0a080" stroke-width="0.8"/>
<rect x="858" y="391" width="56" height="3" fill="#ffffa8" stroke="#a0a080" stroke-width="0.8"/>
<rect x="858" y="418.5" width="56" height="3" fill="#ffffa8" stroke="#a0a080" stroke-width="0.8"/>
<rect x="858.5" y="394.7" width="54.1" height="22.7" rx="11" fill="none" stroke="#ff0000" stroke-width="1.1"/>
<rect x="869" y="398.500" width="33" height="15" rx="7.500" fill="none" stroke="#a0a0a0" stroke-width="1"/>
<rect x="858" y="338" width="8" height="20" fill="none" stroke="#ff0000" stroke-width="1.1"/>
<ellipse cx="877" cy="348" rx="8" ry="5.500" fill="none" stroke="#ff0000" stroke-width="1.1"/>
<rect x="862" y="341" width="10" height="15" fill="none" stroke="#bbb" stroke-width="1"/>
<rect x="857" y="366" width="18" height="26" fill="none" stroke="#ff0000" stroke-width="1.1"/>
<ellipse cx="866" cy="379" rx="7" ry="9" fill="none" stroke="#ff0000" stroke-width="1.1"/>
<circle cx="866" cy="379" r="1.3" fill="#ff0000"/>
<path d="M909.5 339L909.5 360" stroke="#ff0000" stroke-width="1.6" fill="none"/>
<path d="M891 389.5L914 389.5" stroke="#00ffff" stroke-width="1.3" fill="none"/>
<path d="M889 389.5A25 25 0 0 1 914 364.5" fill="none" stroke="#9a9a9a" stroke-width="1.1"/>
<text x="895" y="355.5" fill="#ffff00" font-size="4.4" text-anchor="middle" textLength="28" lengthAdjust="spacingAndGlyphs">BATHROOM</text>
<text x="891" y="361.5" fill="#ffff00" font-size="4.4" text-anchor="middle" textLength="24" lengthAdjust="spacingAndGlyphs">TYPE 17b</text>
<text x="887" y="364.5" fill="#0000ff" font-size="3.2" text-anchor="middle" font-weight="bold">9mm</text>
<text x="886" y="375" fill="#ff0000" font-size="3.2" text-anchor="middle" font-weight="bold">4.8sqm</text>
<rect x="863" y="424" width="15" height="18" fill="none" stroke="#ff0000" stroke-width="1.1"/>
<rect x="865" y="426" width="11" height="14" fill="none" stroke="#ff0000" stroke-width="1"/>
<circle cx="870.5" cy="433" r="1.4" fill="#ff0000"/>
<rect x="862" y="442" width="18" height="4" fill="none" stroke="#ff0000" stroke-width="1"/>
<rect x="863" y="447" width="17" height="18" fill="none" stroke="#ff0000" stroke-width="1"/>
<path d="M863 447L880 465" stroke="#ff0000" stroke-width="1" fill="none"/>
<path d="M863 465L880 447" stroke="#ff0000" stroke-width="1" fill="none"/>
<text x="888" y="431" fill="#ffff00" font-size="4.4" text-anchor="middle" textLength="18" lengthAdjust="spacingAndGlyphs">UTILITY</text>
<text x="886" y="435.5" fill="#0000ff" font-size="3.2" text-anchor="middle" font-weight="bold">9mm</text>
<text x="886" y="453" fill="#ff0000" font-size="3.2" text-anchor="middle" font-weight="bold">2.4sqm</text>
<path d="M911 465L911 438" stroke="#00ffff" stroke-width="1.3" fill="none"/>
<path d="M884 465A27 27 0 0 1 911 438" fill="none" stroke="#9a9a9a" stroke-width="1.1"/>
<path d="M909.5 440L909.5 465" stroke="#00ffff" stroke-width="1.3" fill="none"/>
<path d="M923 465L923 438" stroke="#00ffff" stroke-width="1.3" fill="none"/>
<path d="M923 438A27 27 0 0 1 950 465" fill="none" stroke="#9a9a9a" stroke-width="1.1"/>
<path d="M924 440L924 465" stroke="#00ffff" stroke-width="1.3" fill="none"/>
<rect x="914" y="464" width="9" height="3.5" fill="#ffffa8" stroke="#a0a080" stroke-width="0.8"/>
<rect x="959" y="445" width="64" height="19.5" fill="none" stroke="#ff0000" stroke-width="1"/>
<rect x="954" y="447" width="4" height="19" fill="#ffffa8" stroke="#a0a080" stroke-width="0.8"/>
<text x="991" y="450" fill="#ff0000" font-size="3.2" text-anchor="middle" font-weight="bold">WARDROBE</text>
<text x="991" y="456" fill="#ff0000" font-size="3.4" text-anchor="middle" font-weight="bold">2.4</text>
<rect x="858" y="466.5" width="166" height="2.5" fill="#ffffa8" stroke="#a0a080" stroke-width="0.8"/>
<rect x="1023" y="357" width="3" height="109" fill="#ffffa8" stroke="#a0a080" stroke-width="0.8"/>
<path d="M1044.5 357L1044.5 466" stroke="#ff0000" stroke-width="1" fill="none"/>
<path d="M1024 464.5L1044.5 464.5" stroke="#c09090" stroke-width="1.2" fill="none"/>
<text x="1034" y="411" fill="#ff0000" font-size="3.4" text-anchor="middle" font-weight="bold" transform="rotate(-90 1034 411)">2.4</text>
<text x="1042" y="411" fill="#ff0000" font-size="3.2" text-anchor="middle" font-weight="bold" transform="rotate(-90 1042 411)">WARDROBE</text>
<path d="M834 489A28 28 0 0 1 862 461" fill="none" stroke="#9a9a9a" stroke-width="1.1"/>
<path d="M840 496.5L862 496.5" stroke="#00ffff" stroke-width="1.3" fill="none"/>
<path d="M997 500L1027 500" stroke="#00ffff" stroke-width="1.3" fill="none"/>
<path d="M997 470A30 30 0 0 1 1027 500" fill="none" stroke="#9a9a9a" stroke-width="1.1"/>
<path d="M997 500L1027 500" stroke="#00ffff" stroke-width="1.2" fill="none"/>
<rect x="996" y="502" width="5" height="18" fill="#ffffa8" stroke="#a0a080" stroke-width="0.8"/>
<rect x="1000" y="510.5" width="40" height="5.5" fill="#ffffa8" stroke="#a0a080" stroke-width="0.8"/>
<rect x="913.5" y="511" width="46.5" height="3.5" fill="#ffffa8" stroke="#a0a080" stroke-width="0.8"/>
<rect x="913.5" y="511" width="3.5" height="79" fill="#ffffa8" stroke="#a0a080" stroke-width="0.8"/>
<rect x="956" y="511" width="4" height="79" fill="#ffffa8" stroke="#a0a080" stroke-width="0.8"/>
<rect x="913.5" y="588" width="46.5" height="4" fill="#ffffa8" stroke="#a0a080" stroke-width="0.8"/>
<rect x="921.4" y="542.4" width="30.7" height="24.3" fill="#e8403c"/>
<rect x="921.4" y="542.4" width="30.7" height="24.3" fill="none" stroke="#ff0000" stroke-width="1"/>
<rect x="920" y="516" width="35" height="9" fill="none" stroke="#ff0000" stroke-width="1.1"/>
<ellipse cx="937" cy="531" rx="5" ry="6.500" fill="none" stroke="#ff0000" stroke-width="1.1"/>
<rect x="931" y="519" width="12" height="5" fill="none" stroke="#bbb" stroke-width="1"/>
<rect x="927" y="575" width="20" height="13" fill="none" stroke="#ff0000" stroke-width="1.1"/>
<rect x="929" y="577" width="16" height="9" fill="none" stroke="#ff0000" stroke-width="1"/>
<path d="M956 537L975 537" stroke="#00ffff" stroke-width="1.2" fill="none"/>
<path d="M956 537A25 25 0 0 1 981 562" fill="none" stroke="#9a9a9a" stroke-width="1.1"/>
<path d="M956 562L975 562" stroke="#00ffff" stroke-width="1.2" fill="none"/>
<text x="884" y="516" fill="#ff0000" font-size="3.1" text-anchor="middle" font-weight="bold" textLength="32" lengthAdjust="spacingAndGlyphs">JOINERY ELEMENT</text>
<text x="934" y="610" fill="#ff0000" font-size="3.1" text-anchor="middle" font-weight="bold" textLength="32" lengthAdjust="spacingAndGlyphs">JOINERY ELEMENT</text>
<text x="934" y="680" fill="#ff0000" font-size="3.1" text-anchor="middle" font-weight="bold" textLength="32" lengthAdjust="spacingAndGlyphs">JOINERY ELEMENT</text>
<text x="1001" y="560" fill="#ff0000" font-size="3.1" text-anchor="middle" font-weight="bold" transform="rotate(-90 1001 560)" textLength="32" lengthAdjust="spacingAndGlyphs">JOINERY ELEMENT</text>
<rect x="915" y="594" width="40" height="17" fill="none" stroke="#c09090" stroke-width="1"/>
<rect x="915" y="675" width="40" height="14" fill="none" stroke="#c09090" stroke-width="1"/>
<rect x="997" y="521" width="15" height="82" fill="none" stroke="#ff0000" stroke-width="1"/>
<rect x="997" y="600" width="19" height="5" fill="#ffffa8" stroke="#a0a080" stroke-width="0.8"/>
<text x="930" y="482.5" fill="#ffff00" font-size="4.6" text-anchor="middle">HALL</text>
<text x="930" y="487" fill="#0000ff" font-size="3.2" text-anchor="middle" font-weight="bold">90mm</text>
<text x="988" y="637.5" fill="#ffff00" font-size="4.6" text-anchor="middle">LOBBY</text>
<text x="988" y="642" fill="#0000ff" font-size="3.2" text-anchor="middle" font-weight="bold">9mm</text>
<text x="988" y="652" fill="#ff0000" font-size="3.4" text-anchor="middle" font-weight="bold">24.1sqm</text>
<path d="M913 612L937 612" stroke="#00ffff" stroke-width="1.3" fill="none"/>
<path d="M937 612A24 24 0 0 1 913 636" fill="none" stroke="#9a9a9a" stroke-width="1.1"/>
<path d="M913 617.5L943 617.5" stroke="#00ffff" stroke-width="1.2" fill="none"/>
<path d="M913 666L933 666" stroke="#00ffff" stroke-width="1.3" fill="none"/>
<path d="M913 646A20 20 0 0 1 933 666" fill="none" stroke="#9a9a9a" stroke-width="1.1"/>
<path d="M913 666L925 666" stroke="#00ffff" stroke-width="1.2" fill="none"/>
<rect x="1016.6" y="520.6" width="6.4" height="71.7" fill="url(#conc)" stroke="#ff00ff" stroke-width="1"/>
<rect x="1016.6" y="673" width="6.4" height="24.2" fill="url(#conc)" stroke="#ff00ff" stroke-width="1"/>
<rect x="1017" y="592" width="6.5" height="45" fill="#ffffa8" stroke="#a0a080" stroke-width="0.8"/>
<rect x="1017" y="664" width="6.5" height="9" fill="#ffffa8" stroke="#a0a080" stroke-width="0.8"/>
<path d="M1023.6 637.5L1047.6 637.5" stroke="#00ffff" stroke-width="1.3" fill="none"/>
<path d="M1047.6 637.5A24 24 0 0 1 1023.6 661.5" fill="none" stroke="#9a9a9a" stroke-width="1.1"/>
<path d="M1023.6 637.5L1047 637.5" stroke="#00ffff" stroke-width="1.2" fill="none"/>
<path d="M964.6 697L964.6 727" stroke="#00ffff" stroke-width="1.3" fill="none"/>
<path d="M1008.9 697L1008.9 713" stroke="#00ffff" stroke-width="1.3" fill="none"/>
<path d="M989.2 714.2A30 30 0 0 1 964.6 727" fill="none" stroke="#9a9a9a" stroke-width="1.1"/>
<path d="M1008.9 713A16 16 0 0 1 993.1 699.8" fill="none" stroke="#9a9a9a" stroke-width="1.1"/>
<rect x="955" y="690" width="10" height="7" fill="#ffffa8" stroke="#a0a080" stroke-width="0.8"/>
<rect x="1000" y="510" width="40" height="4" fill="#ffffa8" stroke="#a0a080" stroke-width="0.8"/>
<rect x="1081.7" y="510.3" width="38.3" height="3.2" fill="#ffffa8" stroke="#a0a080" stroke-width="0.8"/>
<rect x="1147" y="510.3" width="27" height="3.2" fill="#ffffa8" stroke="#a0a080" stroke-width="0.8"/>
<rect x="1081.7" y="510.3" width="3.3" height="100.7" fill="#ffffa8" stroke="#a0a080" stroke-width="0.8"/>
<rect x="1023.5" y="608" width="150.5" height="4" fill="#ffffa8" stroke="#a0a080" stroke-width="0.8"/>
<path d="M1044.5 516L1044.5 616" stroke="#ff0000" stroke-width="1" fill="none"/>
<path d="M1024 616L1044.5 616" stroke="#ff0000" stroke-width="1" fill="none"/>
<path d="M1051 543A30 30 0 0 1 1021 513" fill="none" stroke="#9a9a9a" stroke-width="1.1"/>
<path d="M1080.5 512L1080.5 538" stroke="#00ffff" stroke-width="1.3" fill="none"/>
<path d="M1147 543A30 30 0 0 1 1117 513" fill="none" stroke="#9a9a9a" stroke-width="1.1"/>
<path d="M1145.5 512L1145.5 538" stroke="#00ffff" stroke-width="1.3" fill="none"/>
<rect x="1087" y="513" width="17" height="28" fill="none" stroke="#ff0000" stroke-width="1.1"/>
<rect x="1090" y="517" width="14" height="21" fill="none" stroke="#ff0000" stroke-width="1"/>
<circle cx="1094" cy="528" r="1.3" fill="#ff0000"/>
<rect x="1087" y="549" width="17" height="28" fill="none" stroke="#ff0000" stroke-width="1.1"/>
<rect x="1090" y="553" width="14" height="21" fill="none" stroke="#ff0000" stroke-width="1"/>
<circle cx="1094" cy="563" r="1.3" fill="#ff0000"/>
<path d="M1085 575.5L1139 575.5" stroke="#aaa" stroke-width="1.2" fill="none"/>
<rect x="1085" y="579" width="15" height="3" fill="#ffffa8" stroke="#a0a080" stroke-width="0.8"/>
<rect x="1139.8" y="513.8" width="30.2" height="60.4" fill="none" stroke="#ff0000" stroke-width="1.1"/>
<rect x="1144" y="519.3" width="23" height="50.2" rx="10" fill="none" stroke="#ff0000" stroke-width="1.1"/>
<rect x="1148.500" y="527" width="13" height="34" rx="6.500" fill="none" stroke="#a0a0a0" stroke-width="1"/>
<path d="M1139.8 575.5L1139.8 608" stroke="#ff0000" stroke-width="1" fill="none"/>
<path d="M1139.8 576L1170 576" stroke="#ff0000" stroke-width="1" fill="none"/>
<rect x="1087" y="583" width="7" height="23" fill="none" stroke="#ff0000" stroke-width="1.1"/>
<ellipse cx="1105" cy="594.500" rx="7.500" ry="5.500" fill="none" stroke="#ff0000" stroke-width="1.1"/>
<rect x="1091" y="588" width="7" height="14" fill="none" stroke="#bbb" stroke-width="1"/>
<path d="M1131 580L1142 600" stroke="#ff0000" stroke-width="1.6" fill="none"/>
<path d="M1120 600A22 22 0 0 1 1142 578" fill="none" stroke="#bbb" stroke-width="1.1"/>
<rect x="1116" y="606" width="21" height="3" fill="none" stroke="#ff0000" stroke-width="1"/>
<circle cx="1155" cy="605" r="1.8" fill="#ff0000"/>
<text x="1065" y="548" fill="#ffff00" font-size="4.4" text-anchor="middle" textLength="27" lengthAdjust="spacingAndGlyphs">DRESSING</text>
<text x="1066" y="554" fill="#ffff00" font-size="4.4" text-anchor="middle" textLength="13" lengthAdjust="spacingAndGlyphs">AREA</text>
<text x="1066" y="570" fill="#ff0000" font-size="3.2" text-anchor="middle" font-weight="bold">6.7sqm</text>
<text x="1049" y="563" fill="#ff0000" font-size="3.4" text-anchor="middle" font-weight="bold" transform="rotate(-90 1049 563)">2.4</text>
<text x="1049" y="566" fill="#ff0000" font-size="3.2" text-anchor="start" font-weight="bold" transform="rotate(-90 1049 566)">WARDROBE</text>
<text x="1131" y="543" fill="#ffff00" font-size="4.4" text-anchor="middle" textLength="28" lengthAdjust="spacingAndGlyphs">BATHROOM</text>
<text x="1127" y="549" fill="#ffff00" font-size="4.4" text-anchor="middle" textLength="22" lengthAdjust="spacingAndGlyphs">TYPE 01b</text>
<text x="1124" y="553" fill="#0000ff" font-size="3.2" text-anchor="middle" font-weight="bold">30mm</text>
<text x="1125" y="563" fill="#ff0000" font-size="3.2" text-anchor="middle" font-weight="bold">6.1sqm</text>
<path d="M1120 575L1123 578L1126 575" stroke="#00ffff" stroke-width="1" fill="none"/>
<path d="M1123 570L1123 578" stroke="#00ffff" stroke-width="1" fill="none"/>
<rect x="1023.7" y="612.1" width="120.8" height="20.2" fill="none" stroke="#b0b080" stroke-width="0.8"/>
<path d="M1024 632L1148 632" stroke="#ffff00" stroke-width="1.2" fill="none"/>
<rect x="1052.6" y="616.4" width="32.2" height="14.2" rx="2" fill="none" stroke="#ff0000" stroke-width="1.1"/>
<path d="M1068.7 616.4L1068.7 630.6" stroke="#ff0000" stroke-width="1" fill="none"/>
<path d="M1060.5 620L1063.5 623.5L1060.5 627L1057.5 623.5z" stroke="#ff0000" stroke-width="1" fill="#ff0000"/>
<path d="M1076.5 620L1079.5 623.5L1076.5 627L1073.5 623.5z" stroke="#ff0000" stroke-width="1" fill="#ff0000"/>
<rect x="1110.2" y="616.4" width="29.1" height="14.2" fill="none" stroke="#ff0000" stroke-width="1.1"/>
<circle cx="1114" cy="620" r="2.4" fill="none" stroke="#ff0000" stroke-width="1"/>
<circle cx="1114" cy="627" r="2.4" fill="none" stroke="#ff0000" stroke-width="1"/>
<circle cx="1121.2" cy="620" r="2.4" fill="none" stroke="#ff0000" stroke-width="1"/>
<circle cx="1121.2" cy="627" r="2.4" fill="none" stroke="#ff0000" stroke-width="1"/>
<circle cx="1128.4" cy="620" r="2.4" fill="none" stroke="#ff0000" stroke-width="1"/>
<circle cx="1128.4" cy="627" r="2.4" fill="none" stroke="#ff0000" stroke-width="1"/>
<circle cx="1135.6" cy="620" r="2.4" fill="none" stroke="#ff0000" stroke-width="1"/>
<circle cx="1135.6" cy="627" r="2.4" fill="none" stroke="#ff0000" stroke-width="1"/>
<rect x="1148" y="614" width="26" height="17.1" fill="none" stroke="#ffff00" stroke-width="1.2"/>
<path d="M1148 614L1174 631" stroke="#0000ff" stroke-width="1.2" fill="none"/>
<path d="M1148 631L1174 614" stroke="#0000ff" stroke-width="1.2" fill="none"/>
<text x="1136" y="638" fill="#ff0000" font-size="3" text-anchor="middle" font-weight="bold">30/30</text>
<rect x="1151.6" y="634.6" width="19" height="23" fill="none" stroke="#ff0000" stroke-width="1"/>
<path d="M1151.6 634.6L1170.6 657.6" stroke="#ff0000" stroke-width="1" fill="none"/>
<path d="M1151.6 657.6L1170.6 634.6" stroke="#ff0000" stroke-width="1" fill="none"/>
<rect x="1151.6" y="657.6" width="19" height="23" fill="none" stroke="#ff0000" stroke-width="1"/>
<path d="M1151.6 657.6L1170.6 680.6" stroke="#ff0000" stroke-width="1" fill="none"/>
<path d="M1151.6 680.6L1170.6 657.6" stroke="#ff0000" stroke-width="1" fill="none"/>
<rect x="1151.6" y="680.6" width="19" height="23" fill="none" stroke="#ff0000" stroke-width="1"/>
<path d="M1151.6 680.6L1170.6 703.6" stroke="#ff0000" stroke-width="1" fill="none"/>
<path d="M1151.6 703.6L1170.6 680.6" stroke="#ff0000" stroke-width="1" fill="none"/>
<rect x="1151.6" y="703.6" width="19" height="23" fill="none" stroke="#ff0000" stroke-width="1"/>
<path d="M1151.6 703.6L1170.6 726.6" stroke="#ff0000" stroke-width="1" fill="none"/>
<path d="M1151.6 726.6L1170.6 703.6" stroke="#ff0000" stroke-width="1" fill="none"/>
<rect x="1064.4" y="670.9" width="28.5" height="56.6" fill="none" stroke="#ff0000" stroke-width="1.1"/>
<text x="1078.6" y="693" fill="#ff0000" font-size="3.1" text-anchor="middle" font-weight="bold">PENINSULA</text>
<text x="1078.6" y="697.5" fill="#ff0000" font-size="3.1" text-anchor="middle" font-weight="bold">WORKTOP</text>
<rect x="1109" y="675.6" width="21.8" height="4.1" fill="#ffff00"/>
<text x="1119.5" y="685.5" fill="#0000ff" font-size="3.2" text-anchor="middle" font-weight="bold">9mm</text>
<text x="1119.5" y="695" fill="#ff0000" font-size="3.4" text-anchor="middle" font-weight="bold">14.3sqm</text>
<rect x="1020.9" y="697" width="3.3" height="37" fill="#ffffa8" stroke="#a0a080" stroke-width="0.8"/>
<rect x="1020.9" y="727.9" width="74.2" height="6.1" fill="#ffffa8" stroke="#a0a080" stroke-width="0.8"/>
<rect x="1145" y="727.9" width="28.2" height="6.1" fill="#ffffa8" stroke="#a0a080" stroke-width="0.8"/>
<path d="M1045.2 730.5L1101.5 730.5" stroke="#00ffff" stroke-width="1.3" fill="none"/>
<path d="M1101.5 728L1101.5 733" stroke="#00ffff" stroke-width="1.2" fill="none"/>
<path d="M1098 734L1098 742.5L1102 742.5" stroke="#ff0000" stroke-width="1" fill="none"/>
<text x="1104" y="744" fill="#ffff00" font-size="3.6" text-anchor="start" font-weight="bold">Sliding door</text>
<rect x="773" y="511" width="82" height="18" fill="none" stroke="#ff0000" stroke-width="1"/>
<path d="M751 511L773 511" stroke="#ff0000" stroke-width="1" fill="none"/>
<text x="814" y="516.5" fill="#ff0000" font-size="3.2" text-anchor="middle" font-weight="bold">WARDROBE</text>
<text x="814" y="522" fill="#ff0000" font-size="3.4" text-anchor="middle" font-weight="bold">2.4</text>
<text x="441.5" y="431" fill="#ffff00" font-size="4.6" text-anchor="middle" textLength="30" lengthAdjust="spacingAndGlyphs">BEDROOM 1</text>
<text x="441.5" y="445" fill="#ff0000" font-size="3.4" text-anchor="middle" font-weight="bold">21.0sqm</text>
<text x="616" y="388.5" fill="#ffff00" font-size="4.6" text-anchor="middle" textLength="30" lengthAdjust="spacingAndGlyphs">BEDROOM 2</text>
<text x="616" y="402.5" fill="#ff0000" font-size="3.4" text-anchor="middle" font-weight="bold">13.4sqm</text>
<text x="813" y="392" fill="#ffff00" font-size="4.6" text-anchor="middle" textLength="30" lengthAdjust="spacingAndGlyphs">BEDROOM 2</text>
<text x="813" y="406" fill="#ff0000" font-size="3.4" text-anchor="middle" font-weight="bold">22.2sqm</text>
<text x="981" y="391" fill="#ffff00" font-size="4.6" text-anchor="middle" textLength="30" lengthAdjust="spacingAndGlyphs">BEDROOM 3</text>
<text x="981" y="405" fill="#ff0000" font-size="3.4" text-anchor="middle" font-weight="bold">13.7sqm</text>
<text x="1136.5" y="451.5" fill="#ffff00" font-size="4.6" text-anchor="middle" textLength="30" lengthAdjust="spacingAndGlyphs">BEDROOM 1</text>
<text x="1136.5" y="465.5" fill="#ff0000" font-size="3.4" text-anchor="middle" font-weight="bold">20.1sqm</text>
<text x="443.5" y="761.5" fill="#ffff00" font-size="4.6" text-anchor="middle" textLength="17" lengthAdjust="spacingAndGlyphs">DINING</text>
<text x="443.5" y="766" fill="#0000ff" font-size="3.2" text-anchor="middle" font-weight="bold">Timber</text>
<text x="446" y="787" fill="#ff0000" font-size="3.4" text-anchor="middle" font-weight="bold">17.1sqm</text>
<text x="575" y="761.5" fill="#ffff00" font-size="4.6" text-anchor="middle" textLength="30" lengthAdjust="spacingAndGlyphs">RECEPTION</text>
<text x="575" y="766" fill="#0000ff" font-size="3.2" text-anchor="middle" font-weight="bold">Timber</text>
<text x="576" y="787" fill="#ff0000" font-size="3.4" text-anchor="middle" font-weight="bold">28.8sqm</text>
<text x="707" y="761.5" fill="#ffff00" font-size="4.6" text-anchor="middle" textLength="30" lengthAdjust="spacingAndGlyphs">RECEPTION</text>
<text x="707" y="766" fill="#0000ff" font-size="3.2" text-anchor="middle" font-weight="bold">Timber</text>
<text x="760" y="787" fill="#ff0000" font-size="3.4" text-anchor="middle" font-weight="bold">34.9sqm</text>
<text x="1070" y="778.5" fill="#ffff00" font-size="4.6" text-anchor="middle" textLength="17" lengthAdjust="spacingAndGlyphs">DINING</text>
<text x="1070" y="783" fill="#0000ff" font-size="3.2" text-anchor="middle" font-weight="bold">Timber</text>
<text x="1070" y="795" fill="#ff0000" font-size="3.4" text-anchor="middle" font-weight="bold">22.3sqm</text>
<text x="766" y="343" fill="#ffff00" font-size="3.6" text-anchor="middle" font-weight="bold" textLength="28" lengthAdjust="spacingAndGlyphs">SLIDING WINDOW</text>
<path d="M774 337L785 337" stroke="#00ffff" stroke-width="1.2" fill="none"/>
<path d="M782 334.5L785 337L782 339.5" stroke="#00ffff" stroke-width="1.2" fill="none"/>
<text x="744" y="304" fill="#ffff00" font-size="4.4" text-anchor="middle" textLength="24" lengthAdjust="spacingAndGlyphs">BALCONY</text>
<text x="747" y="310" fill="#0000ff" font-size="3.2" text-anchor="middle" font-weight="bold" textLength="28" lengthAdjust="spacingAndGlyphs">Timber Decking</text>
</g>
<g id="lower" shape-rendering="crispEdges">
<path d="M368 822L386 822" stroke="#9c9c9c" stroke-width="0.9" fill="none"/>
<path d="M368 826.4L386 826.4" stroke="#9c9c9c" stroke-width="0.9" fill="none"/>
<path d="M368 830.7L386 830.7" stroke="#9c9c9c" stroke-width="0.9" fill="none"/>
<path d="M368 835L386 835" stroke="#9c9c9c" stroke-width="0.9" fill="none"/>
<path d="M368 839.4L386 839.4" stroke="#9c9c9c" stroke-width="0.9" fill="none"/>
<path d="M368 843.8L470.9 843.8" stroke="#9c9c9c" stroke-width="0.9" fill="none"/>
<path d="M368 848.1L475.3 848.1" stroke="#9c9c9c" stroke-width="0.9" fill="none"/>
<path d="M368 852.5L479.7 852.5" stroke="#9c9c9c" stroke-width="0.9" fill="none"/>
<path d="M368 856.8L484 856.8" stroke="#9c9c9c" stroke-width="0.9" fill="none"/>
<path d="M368 861.1L488.3 861.1" stroke="#9c9c9c" stroke-width="0.9" fill="none"/>
<path d="M368 865.5L492.7 865.5" stroke="#9c9c9c" stroke-width="0.9" fill="none"/>
<path d="M368 869.9L497.1 869.9" stroke="#9c9c9c" stroke-width="0.9" fill="none"/>
<path d="M368 874.2L501.4 874.2" stroke="#9c9c9c" stroke-width="0.9" fill="none"/>
<path d="M368 878.5L505.7 878.5" stroke="#9c9c9c" stroke-width="0.9" fill="none"/>
<path d="M368 882.9L511 882.9" stroke="#9c9c9c" stroke-width="0.9" fill="none"/>
<path d="M368 887.2L511 887.2" stroke="#9c9c9c" stroke-width="0.9" fill="none"/>
<path d="M368 891.6L511 891.6" stroke="#9c9c9c" stroke-width="0.9" fill="none"/>
<path d="M368 896L511 896" stroke="#9c9c9c" stroke-width="0.9" fill="none"/>
<path d="M368 900.3L511 900.3" stroke="#9c9c9c" stroke-width="0.9" fill="none"/>
<path d="M368 904.6L511 904.6" stroke="#9c9c9c" stroke-width="0.9" fill="none"/>
<path d="M386.8 814.1L362.8 814.1L362.8 912.1L513 912.1L513 892.1" stroke="#0000ff" stroke-width="1.3" fill="none"/>
<path d="M386.8 817.5L366 817.5L366 908.8L510 908.8" stroke="#0000ff" stroke-width="1" fill="none"/>
<path d="M371 823L371 902.4" stroke="#ff0000" stroke-width="2.2" fill="none"/>
<path d="M371 902.4L510.4 902.4" stroke="#ff0000" stroke-width="2.2" fill="none"/>
<path d="M510 892L510 902.4" stroke="#ff0000" stroke-width="2.2" fill="none"/>
<path d="M371 823L384.2 823" stroke="#ff0000" stroke-width="2.2" fill="none"/>
<path d="M368 907L513 907" stroke="#9c9c9c" stroke-width="1" fill="none"/>
<path d="M409.8 843L470.2 843" stroke="#ff0000" stroke-width="2.2" fill="none"/>
<path d="M470.2 843L507.8 880.6" stroke="#ff0000" stroke-width="2.2" fill="none"/>
<path d="M409.8 840.5L471 840.5" stroke="#ff0000" stroke-width="1" fill="none"/>
<path d="M472 841L509.5 878.8" stroke="#ff0000" stroke-width="1" fill="none"/>
<path d="M368 820L392.7 866.6L513 905.7" stroke="#0000ff" stroke-width="1" fill="none"/>
<path d="M368 905L392.7 866.6" stroke="#0000ff" stroke-width="1" fill="none"/>
<rect x="385.8" y="869.1" width="24.3" height="20.5" fill="#fff" stroke="#00ff00" stroke-width="1.2"/>
<rect x="390.1" y="871.7" width="16.7" height="15.3" fill="none" stroke="#00ff00" stroke-width="1.2"/>
<rect x="393" y="879" width="12" height="5.5" fill="url(#conc)" stroke="#ff00ff" stroke-width="1"/>
<path d="M383 828L383 840" stroke="#0000ff" stroke-width="1" fill="none"/>
<path d="M381 837L383 841L385 837" stroke="#0000ff" stroke-width="1" fill="none"/>
<path d="M384 866.5L391 866.5" stroke="#0000ff" stroke-width="1" fill="none"/>
<path d="M388 864.5L391 866.5L388 868.5" stroke="#0000ff" stroke-width="1" fill="none"/>
<text x="379" y="868" fill="#ffff00" font-size="3.2" text-anchor="middle" font-weight="bold">FALL</text>
<path d="M440 866.5L453 866.5" stroke="#0000ff" stroke-width="1" fill="none"/>
<path d="M443 864.5L440 866.5L443 868.5" stroke="#0000ff" stroke-width="1" fill="none"/>
<text x="446" y="868" fill="#ffff00" font-size="3.2" text-anchor="middle" font-weight="bold">FALL</text>
<path d="M430 885L430 900" stroke="#0000ff" stroke-width="1" fill="none"/>
<path d="M428 889L430 885L432 889" stroke="#0000ff" stroke-width="1" fill="none"/>
<text x="430" y="895" fill="#ffff00" font-size="3.2" text-anchor="middle" font-weight="bold" transform="rotate(-90 430 895)">FALL</text>
<text x="458" y="875.5" fill="#e8e860" font-size="4.4" text-anchor="middle" textLength="24" lengthAdjust="spacingAndGlyphs">BALCONY</text>
<text x="461" y="881" fill="#0000ff" font-size="3.2" text-anchor="middle" font-weight="bold" textLength="28" lengthAdjust="spacingAndGlyphs">Timber Decking</text>
<path d="M423.4 835.9L436.2 835.9" stroke="#00ffff" stroke-width="1.2" fill="none"/>
<path d="M433 833L436.2 835.9L433 838.8" stroke="#00ffff" stroke-width="1.2" fill="none"/>
<text x="438" y="833.5" fill="#ffff00" font-size="3.4" text-anchor="start" font-weight="bold" textLength="26" lengthAdjust="spacingAndGlyphs">SLIDING DOOR</text>
<text x="339" y="810" fill="#ffff00" font-size="3.4" text-anchor="start" font-weight="bold">+72mm</text>
<text x="339" y="918" fill="#ffff00" font-size="3.4" text-anchor="start" font-weight="bold">+72mm</text>
<text x="530" y="918" fill="#ffff00" font-size="3.4" text-anchor="start" font-weight="bold">+41mm</text>
<path d="M705.1 899L866.3 899" stroke="#9c9c9c" stroke-width="0.9" fill="none"/>
<path d="M699.5 905L871.9 905" stroke="#9c9c9c" stroke-width="0.9" fill="none"/>
<path d="M693.9 911L877.5 911" stroke="#9c9c9c" stroke-width="0.9" fill="none"/>
<path d="M688.3 917L883.1 917" stroke="#9c9c9c" stroke-width="0.9" fill="none"/>
<path d="M682.7 923L888.7 923" stroke="#9c9c9c" stroke-width="0.9" fill="none"/>
<path d="M677.1 929L894.3 929" stroke="#9c9c9c" stroke-width="0.9" fill="none"/>
<path d="M708.3 893.4L863.1 893.4" stroke="#ff0000" stroke-width="2.3" fill="none"/>
<path d="M708.3 893.4L673.7 930.5" stroke="#ff0000" stroke-width="2.3" fill="none"/>
<path d="M863.1 893.4L899 930.5" stroke="#ff0000" stroke-width="2.3" fill="none"/>
<path d="M706 891L865 891" stroke="#ff0000" stroke-width="1" fill="none"/>
<path d="M706.5 891L671.5 928.5" stroke="#ff0000" stroke-width="1" fill="none"/>
<path d="M865 891L901 928.5" stroke="#ff0000" stroke-width="1" fill="none"/>
<path d="M748 893.4L748 897" stroke="#ff0000" stroke-width="1" fill="none"/>
<path d="M784 893.4L784 897" stroke="#ff0000" stroke-width="1" fill="none"/>
<path d="M824 893.4L824 897" stroke="#ff0000" stroke-width="1" fill="none"/>
<path d="M680 933.1L892.5 933.1" stroke="#ff0000" stroke-width="2.2" fill="none"/>
<path d="M676 939.5L897 939.5" stroke="#9c9c9c" stroke-width="1" fill="none"/>
<path d="M713.4 908.3L859.3 908.3" stroke="#0000ff" stroke-width="1.3" fill="none"/>
<circle cx="713.4" cy="908.3" r="2.4" fill="none" stroke="#ff0000" stroke-width="1"/>
<circle cx="859.3" cy="908.3" r="2.4" fill="none" stroke="#ff0000" stroke-width="1"/>
<path d="M757.7 897L757.7 907" stroke="#0000ff" stroke-width="1.1" fill="none"/>
<path d="M755.7 904L757.7 908L759.7 904" stroke="#0000ff" stroke-width="1.1" fill="none"/>
<text x="754.2" y="901" fill="#ffff00" font-size="3.2" text-anchor="middle" font-weight="bold" transform="rotate(-90 754.2 901)">FALL</text>
<path d="M815.8 897L815.8 907" stroke="#0000ff" stroke-width="1.1" fill="none"/>
<path d="M813.8 904L815.8 908L817.8 904" stroke="#0000ff" stroke-width="1.1" fill="none"/>
<text x="812.3" y="901" fill="#ffff00" font-size="3.2" text-anchor="middle" font-weight="bold" transform="rotate(-90 812.3 901)">FALL</text>
<path d="M740.3 912L740.3 930.5" stroke="#0000ff" stroke-width="1.1" fill="none"/>
<path d="M738.3 915.5L740.3 911.5L742.3 915.5" stroke="#0000ff" stroke-width="1.1" fill="none"/>
<text x="743.8" y="925" fill="#ffff00" font-size="3.2" text-anchor="middle" font-weight="bold" transform="rotate(-90 743.8 925)">FALL</text>
<text x="737.3" y="925" fill="#ffff00" font-size="3.2" text-anchor="middle" font-weight="bold" transform="rotate(-90 737.3 925)">1:80</text>
<path d="M832.4 912L832.4 930.5" stroke="#0000ff" stroke-width="1.1" fill="none"/>
<path d="M830.4 915.5L832.4 911.5L834.4 915.5" stroke="#0000ff" stroke-width="1.1" fill="none"/>
<text x="835.9" y="925" fill="#ffff00" font-size="3.2" text-anchor="middle" font-weight="bold" transform="rotate(-90 835.9 925)">FALL</text>
<text x="829.4" y="925" fill="#ffff00" font-size="3.2" text-anchor="middle" font-weight="bold" transform="rotate(-90 829.4 925)">1:80</text>
<circle cx="781.2" cy="899.3" r="1.6" fill="#0000ff"/>
<circle cx="781.2" cy="929.8" r="1.6" fill="#0000ff"/>
<text x="709" y="914.5" fill="#0000ff" font-size="3" text-anchor="middle" font-weight="bold">RWO</text>
<text x="853" y="914.5" fill="#0000ff" font-size="3" text-anchor="middle" font-weight="bold">RWO</text>
<text x="768" y="919.5" fill="#e8e860" font-size="4.4" text-anchor="middle" textLength="24" lengthAdjust="spacingAndGlyphs">BALCONY</text>
<text x="766" y="925" fill="#0000ff" font-size="3.2" text-anchor="middle" font-weight="bold" textLength="28" lengthAdjust="spacingAndGlyphs">Timber Decking</text>
<path d="M760.2 882.7L770.5 882.7" stroke="#00ffff" stroke-width="1.2" fill="none"/>
<path d="M763.5 880L760.2 882.7L763.5 885.4" stroke="#00ffff" stroke-width="1.2" fill="none"/>
<path d="M800.4 882.7L811.9 882.7" stroke="#00ffff" stroke-width="1.2" fill="none"/>
<path d="M808.6 880L811.9 882.7L808.6 885.4" stroke="#00ffff" stroke-width="1.2" fill="none"/>
<text x="786" y="881" fill="#ffff00" font-size="3.4" text-anchor="middle" font-weight="bold" textLength="28" lengthAdjust="spacingAndGlyphs">SLIDING DOORS</text>
<text x="740" y="876" fill="#ffff00" font-size="3.2" text-anchor="middle" font-weight="bold">+41.5mm</text>
<text x="735" y="954.5" fill="#ffff00" font-size="3.2" text-anchor="middle" font-weight="bold">+117.5mm</text>
<path d="M1099.4 847L1162 847" stroke="#9c9c9c" stroke-width="0.9" fill="none"/>
<path d="M1095.1 851.3L1162 851.3" stroke="#9c9c9c" stroke-width="0.9" fill="none"/>
<path d="M1090.7 855.6L1162 855.6" stroke="#9c9c9c" stroke-width="0.9" fill="none"/>
<path d="M1086.3 859.9L1162 859.9" stroke="#9c9c9c" stroke-width="0.9" fill="none"/>
<path d="M1082 864.2L1162 864.2" stroke="#9c9c9c" stroke-width="0.9" fill="none"/>
<path d="M1077.6 868.5L1162 868.5" stroke="#9c9c9c" stroke-width="0.9" fill="none"/>
<path d="M1073.2 872.8L1162 872.8" stroke="#9c9c9c" stroke-width="0.9" fill="none"/>
<path d="M1068.8 877.1L1162 877.1" stroke="#9c9c9c" stroke-width="0.9" fill="none"/>
<path d="M1070 881.4L1162 881.4" stroke="#9c9c9c" stroke-width="0.9" fill="none"/>
<path d="M1070 885.7L1162 885.7" stroke="#9c9c9c" stroke-width="0.9" fill="none"/>
<path d="M1070 890L1172.5 890" stroke="#9c9c9c" stroke-width="0.9" fill="none"/>
<path d="M1062 894.3L1172.5 894.3" stroke="#9c9c9c" stroke-width="0.9" fill="none"/>
<path d="M1062 898.6L1172.5 898.6" stroke="#9c9c9c" stroke-width="0.9" fill="none"/>
<path d="M1062 902.9L1172.5 902.9" stroke="#9c9c9c" stroke-width="0.9" fill="none"/>
<path d="M1062 907.2L1172.5 907.2" stroke="#9c9c9c" stroke-width="0.9" fill="none"/>
<path d="M1101.5 843.1L1163.5 843.1" stroke="#ff0000" stroke-width="2.3" fill="none"/>
<path d="M1101.5 843.1L1064.4 879.5" stroke="#ff0000" stroke-width="2.3" fill="none"/>
<path d="M1100.5 840.7L1163.5 840.7" stroke="#ff0000" stroke-width="1" fill="none"/>
<path d="M1099.5 841.3L1062.6 877.5" stroke="#ff0000" stroke-width="1" fill="none"/>
<path d="M1132 840.7L1132 846" stroke="#ff0000" stroke-width="1" fill="none"/>
<path d="M1060.6 893.5L1060.6 911.5L1173.2 911.5" stroke="#0000ff" stroke-width="1.2" fill="none"/>
<path d="M1063 902.5L1170.7 902.5" stroke="#ff0000" stroke-width="2.2" fill="none"/>
<path d="M1063 896L1063 902.5" stroke="#ff0000" stroke-width="1.5" fill="none"/>
<path d="M1106.6 846.7L1159.1 889.2L1060.6 909.7" stroke="#0000ff" stroke-width="1.1" fill="none"/>
<circle cx="1108.5" cy="848.5" r="1.6" fill="#0000ff"/>
<circle cx="1159.1" cy="889.2" r="2.4" fill="none" stroke="#ff0000" stroke-width="1"/>
<circle cx="1060.6" cy="909.7" r="1.6" fill="none" stroke="#0000ff" stroke-width="1"/>
<path d="M1152 853L1152 872" stroke="#0000ff" stroke-width="1" fill="none"/>
<path d="M1150 868.5L1152 872.5L1154 868.5" stroke="#0000ff" stroke-width="1" fill="none"/>
<text x="1149" y="866" fill="#ffff00" font-size="3.2" text-anchor="middle" font-weight="bold" transform="rotate(-90 1149 866)">FALL</text>
<text x="1156" y="866" fill="#ffff00" font-size="3.2" text-anchor="middle" font-weight="bold" transform="rotate(-90 1156 866)">1:80</text>
<path d="M1086 879.5L1104 879.5" stroke="#0000ff" stroke-width="1" fill="none"/>
<path d="M1100.5 877.5L1104 879.5L1100.5 881.5" stroke="#0000ff" stroke-width="1" fill="none"/>
<text x="1096" y="877.5" fill="#ffff00" font-size="3.2" text-anchor="middle" font-weight="bold">FALL</text>
<text x="1096" y="884.5" fill="#ffff00" font-size="3.2" text-anchor="middle" font-weight="bold">1:80</text>
<path d="M1145 893L1145 911" stroke="#0000ff" stroke-width="1" fill="none"/>
<path d="M1143 896.5L1145 892.5L1147 896.5" stroke="#0000ff" stroke-width="1" fill="none"/>
<text x="1142" y="904" fill="#ffff00" font-size="3.2" text-anchor="middle" font-weight="bold" transform="rotate(-90 1142 904)">FALL</text>
<text x="1127" y="869.5" fill="#e8e860" font-size="4.4" text-anchor="middle" textLength="24" lengthAdjust="spacingAndGlyphs">BALCONY</text>
<text x="1128" y="875" fill="#0000ff" font-size="3.2" text-anchor="middle" font-weight="bold" textLength="28" lengthAdjust="spacingAndGlyphs">Timber Decking</text>
<path d="M1124 836.5L1136 836.5" stroke="#00ffff" stroke-width="1.2" fill="none"/>
<path d="M1127.5 833.7L1124 836.5L1127.5 839.3" stroke="#00ffff" stroke-width="1.2" fill="none"/>
<text x="1139" y="835.5" fill="#ffff00" font-size="3.4" text-anchor="start" font-weight="bold" textLength="26" lengthAdjust="spacingAndGlyphs">SLIDING DOOR</text>
<text x="1080" y="835.5" fill="#ffff00" font-size="3.2" text-anchor="start" font-weight="bold">+41.5mm</text>
<text x="1025" y="921.5" fill="#ffff00" font-size="3.2" text-anchor="start" font-weight="bold">+74.5mm</text>
<rect x="612.2" y="746.3" width="42.8" height="88.3" fill="url(#conc2)" stroke="#777" stroke-width="0.8"/>
<rect x="617.9" y="750.9" width="11.5" height="24.8" fill="#fff"/>
<rect x="637" y="750.9" width="12.9" height="24.8" fill="#fff"/>
<rect x="612.2" y="780.8" width="17.2" height="19.2" fill="#fff"/>
<rect x="637" y="780.8" width="18" height="19.2" fill="#fff"/>
<rect x="617.9" y="804.6" width="11.5" height="24.9" fill="#fff"/>
<rect x="637" y="804.6" width="12.9" height="24.9" fill="#fff"/>
<rect x="630.3" y="772" width="5.2" height="37.5" fill="url(#conc)" stroke="#ff00ff" stroke-width="1"/>
<rect x="638" y="752" width="11" height="23" fill="none" stroke="#00ff00" stroke-width="0.8"/>
<rect x="638" y="806" width="11" height="23" fill="none" stroke="#00ff00" stroke-width="0.8"/>
<circle cx="623.5" cy="757.8" r="4.3" fill="none" stroke="#0000ff" stroke-width="1.3"/>
<path d="M618 757.8L629 757.8" stroke="#0000ff" stroke-width="1" fill="none"/>
<path d="M623.5 752.3L623.5 763.3" stroke="#0000ff" stroke-width="1" fill="none"/>
<circle cx="623.5" cy="768.8" r="4.3" fill="none" stroke="#0000ff" stroke-width="1.3"/>
<path d="M618 768.8L629 768.8" stroke="#0000ff" stroke-width="1" fill="none"/>
<path d="M623.5 763.3L623.5 774.3" stroke="#0000ff" stroke-width="1" fill="none"/>
<circle cx="643.5" cy="768.8" r="4.3" fill="none" stroke="#0000ff" stroke-width="1.3"/>
<path d="M638 768.8L649 768.8" stroke="#0000ff" stroke-width="1" fill="none"/>
<path d="M643.5 763.3L643.5 774.3" stroke="#0000ff" stroke-width="1" fill="none"/>
<circle cx="623.5" cy="790.6" r="4.3" fill="none" stroke="#0000ff" stroke-width="1.3"/>
<path d="M618 790.6L629 790.6" stroke="#0000ff" stroke-width="1" fill="none"/>
<path d="M623.5 785.1L623.5 796.1" stroke="#0000ff" stroke-width="1" fill="none"/>
<circle cx="643.5" cy="790.6" r="4.3" fill="none" stroke="#0000ff" stroke-width="1.3"/>
<path d="M638 790.6L649 790.6" stroke="#0000ff" stroke-width="1" fill="none"/>
<path d="M643.5 785.1L643.5 796.1" stroke="#0000ff" stroke-width="1" fill="none"/>
<circle cx="623.5" cy="812.3" r="4.3" fill="none" stroke="#0000ff" stroke-width="1.3"/>
<path d="M618 812.3L629 812.3" stroke="#0000ff" stroke-width="1" fill="none"/>
<path d="M623.5 806.8L623.5 817.8" stroke="#0000ff" stroke-width="1" fill="none"/>
<circle cx="623.5" cy="823" r="4.3" fill="none" stroke="#0000ff" stroke-width="1.3"/>
<path d="M618 823L629 823" stroke="#0000ff" stroke-width="1" fill="none"/>
<path d="M623.5 817.5L623.5 828.5" stroke="#0000ff" stroke-width="1" fill="none"/>
<circle cx="643.5" cy="823" r="4.3" fill="none" stroke="#0000ff" stroke-width="1.3"/>
<path d="M638 823L649 823" stroke="#0000ff" stroke-width="1" fill="none"/>
<path d="M643.5 817.5L643.5 828.5" stroke="#0000ff" stroke-width="1" fill="none"/>
<text x="610.5" y="790.5" fill="#0000ff" font-size="3.4" text-anchor="middle" font-weight="bold" transform="rotate(-90 610.5 790.5)" textLength="19" lengthAdjust="spacingAndGlyphs">FIREPLACE</text>
<text x="658.5" y="790.5" fill="#0000ff" font-size="3.4" text-anchor="middle" font-weight="bold" transform="rotate(-90 658.5 790.5)" textLength="19" lengthAdjust="spacingAndGlyphs">FIREPLACE</text>
<text x="634.3" y="790.5" fill="#0000ff" font-size="3" text-anchor="middle" font-weight="bold" transform="rotate(-90 634.3 790.5)" textLength="36" lengthAdjust="spacingAndGlyphs">30 30 30 30</text>
<rect x="934.2" y="757.8" width="25.6" height="65.3" fill="url(#conc2)" stroke="#777" stroke-width="0.8"/>
<rect x="939.9" y="762.9" width="14.8" height="55.1" fill="#fff" stroke="#00ff00" stroke-width="0.8"/>
<rect x="935.3" y="771.4" width="6.6" height="37.6" fill="url(#conc)" stroke="#ff00ff" stroke-width="1"/>
<circle cx="948.8" cy="769.3" r="4.3" fill="none" stroke="#0000ff" stroke-width="1.3"/>
<path d="M943.3 769.3L954.3 769.3" stroke="#0000ff" stroke-width="1" fill="none"/>
<path d="M948.8 763.8L948.8 774.8" stroke="#0000ff" stroke-width="1" fill="none"/>
<circle cx="948.8" cy="790.6" r="4.3" fill="none" stroke="#0000ff" stroke-width="1.3"/>
<path d="M943.3 790.6L954.3 790.6" stroke="#0000ff" stroke-width="1" fill="none"/>
<path d="M948.8 785.1L948.8 796.1" stroke="#0000ff" stroke-width="1" fill="none"/>
</g>
<g id="legend">
<rect x="1290.5" y="308" width="115" height="406.7" fill="none" stroke="#ff0000" stroke-width="1.2"/>
<text x="1298.8" y="333" fill="#ffff00" font-size="4.4" text-anchor="start">KEY</text>
<rect x="1299" y="338.8" width="8" height="8" fill="#f4b088" stroke="#ffff00" stroke-width="1.3"/>
<text x="1314" y="344.2" fill="#ffff00" font-size="4.3" text-anchor="start" font-weight="bold" textLength="40" lengthAdjust="spacingAndGlyphs">FIRE FIGHTING LIFT</text>
<rect x="1299" y="354" width="8" height="8" fill="#ffff00" stroke="#ffff00" stroke-width="1.3"/>
<text x="1314" y="359.4" fill="#ffff00" font-size="4.3" text-anchor="start" font-weight="bold" textLength="34" lengthAdjust="spacingAndGlyphs">PASSENGER LIFT</text>
<rect x="1299" y="369.4" width="8" height="8" fill="#1c4040" stroke="#ffff00" stroke-width="1.3"/>
<rect x="1299" y="384" width="8" height="8" fill="#04141c" stroke="#ffff00" stroke-width="1.3"/>
<rect x="1299" y="398.6" width="8" height="8" fill="#1c0808" stroke="#ffff00" stroke-width="1.3"/>
<text x="1314" y="404" fill="#ffff00" font-size="4.3" text-anchor="start" font-weight="bold" textLength="71" lengthAdjust="spacingAndGlyphs">MECHANICALLY VENTILATED LOBBY</text>
<rect x="1299" y="413.9" width="8" height="8" fill="#585858" stroke="#ffff00" stroke-width="1.3"/>
<text x="1314" y="419.3" fill="#ffff00" font-size="4.3" text-anchor="start" font-weight="bold" textLength="87" lengthAdjust="spacingAndGlyphs">PROTECTED STAIRWAY ON ESCAPE ROUTE</text>
<rect x="1299" y="431" width="8" height="8" fill="#e878e8" stroke="#ffff00" stroke-width="1.3"/>
<text x="1314" y="436.4" fill="#ffff00" font-size="4.3" text-anchor="start" font-weight="bold" textLength="22" lengthAdjust="spacingAndGlyphs">DRY RISER</text>
<rect x="1299" y="446.2" width="8" height="8" fill="#4a7a3a" stroke="#ffff00" stroke-width="1.3"/>
<text x="1314" y="451.6" fill="#ffff00" font-size="4.3" text-anchor="start" font-weight="bold" textLength="26" lengthAdjust="spacingAndGlyphs">SMOKE VENT</text>
<text x="1314" y="372.4" fill="#ffff00" font-size="4.3" text-anchor="start" font-weight="bold" textLength="62" lengthAdjust="spacingAndGlyphs">LOBBY WITH SMOKE DILUTION</text>
<text x="1314" y="377" fill="#ffff00" font-size="4.3" text-anchor="start" font-weight="bold" textLength="16" lengthAdjust="spacingAndGlyphs">SYSTEM</text>
<text x="1314" y="387" fill="#ffff00" font-size="4.3" text-anchor="start" font-weight="bold" textLength="74" lengthAdjust="spacingAndGlyphs">FIRE FIGHTING LOBBY WITH SMOKE</text>
<text x="1314" y="391.6" fill="#ffff00" font-size="4.3" text-anchor="start" font-weight="bold" textLength="36" lengthAdjust="spacingAndGlyphs">DILUTION SYSTEM</text>
<path d="M1292 463.8L1307 463.8" stroke="#ff4500" stroke-width="2.2" fill="none" stroke-dasharray="6.500 2"/>
<text x="1314" y="465.2" fill="#ffff00" font-size="4.3" text-anchor="start" font-weight="bold" textLength="83" lengthAdjust="spacingAndGlyphs">30MINS FIRE RESISTING CONSTRUCTION</text>
<path d="M1292 475.9L1307 475.9" stroke="#00ff00" stroke-width="2.2" fill="none" stroke-dasharray="6.500 2"/>
<text x="1314" y="477.3" fill="#ffff00" font-size="4.3" text-anchor="start" font-weight="bold" textLength="83" lengthAdjust="spacingAndGlyphs">60MINS FIRE RESISTING CONSTRUCTION</text>
<path d="M1292 487.8L1307 487.8" stroke="#0000ff" stroke-width="2.2" fill="none" stroke-dasharray="6.500 2"/>
<text x="1314" y="489.2" fill="#ffff00" font-size="4.3" text-anchor="start" font-weight="bold" textLength="83" lengthAdjust="spacingAndGlyphs">90MINS FIRE RESISTING CONSTRUCTION</text>
<circle cx="1303" cy="502" r="3.6" fill="#ffb400"/>
<text x="1314" y="503.4" fill="#ffff00" font-size="4.3" text-anchor="start" font-weight="bold" textLength="36" lengthAdjust="spacingAndGlyphs">FD20 FIRE DOOR</text>
<circle cx="1303" cy="514.5" r="3.6" fill="#20e020"/>
<text x="1314" y="515.9" fill="#ffff00" font-size="4.3" text-anchor="start" font-weight="bold" textLength="36" lengthAdjust="spacingAndGlyphs">FD30 FIRE DOOR</text>
<circle cx="1303" cy="526.2" r="3.6" fill="#ff4500"/>
<text x="1314" y="527.6" fill="#ffff00" font-size="4.3" text-anchor="start" font-weight="bold" textLength="38" lengthAdjust="spacingAndGlyphs">FD30S FIRE DOOR</text>
<circle cx="1303" cy="538" r="3.6" fill="#20e8f0"/>
<text x="1314" y="539.4" fill="#ffff00" font-size="4.3" text-anchor="start" font-weight="bold" textLength="36" lengthAdjust="spacingAndGlyphs">FD60 FIRE DOOR</text>
<circle cx="1303" cy="549.8" r="3.6" fill="#a010e0"/>
<text x="1314" y="551.2" fill="#ffff00" font-size="4.3" text-anchor="start" font-weight="bold" textLength="38" lengthAdjust="spacingAndGlyphs">FD60S FIRE DOOR</text>
<path d="M1292 563.9L1306.6 563.9" stroke="#0c2014" stroke-width="1.6" fill="none"/>
<text x="1314" y="564" fill="#ffff00" font-size="4.3" text-anchor="start" font-weight="bold" textLength="82" lengthAdjust="spacingAndGlyphs">INTERNAL DISTANCE WITHIN APARTMENT</text>
<text x="1314" y="568.8" fill="#ffff00" font-size="4.3" text-anchor="start" font-weight="bold" textLength="86" lengthAdjust="spacingAndGlyphs">HALLWAY 9m MAXIMUM TRAVEL DISTANCE</text>
<path d="M1292 575.7L1306.6 575.7" stroke="#a010e0" stroke-width="1.6" fill="none"/>
<text x="1314" y="576" fill="#ffff00" font-size="4.3" text-anchor="start" font-weight="bold" textLength="78" lengthAdjust="spacingAndGlyphs">EXTERNAL DISTANCE FROM APARTMENT</text>
<text x="1314" y="580.8" fill="#ffff00" font-size="4.3" text-anchor="start" font-weight="bold" textLength="82" lengthAdjust="spacingAndGlyphs">TO PROTECTED STAIR MAXIMUM TRAVEL</text>
<text x="1314" y="585.6" fill="#ffff00" font-size="4.3" text-anchor="start" font-weight="bold" textLength="70" lengthAdjust="spacingAndGlyphs">DISTANCE OF 30m ON ENTRANCE</text>
<text x="1314" y="590.4" fill="#ffff00" font-size="4.3" text-anchor="start" font-weight="bold" textLength="58" lengthAdjust="spacingAndGlyphs">LEVEL AND 7.5m ON OTHER</text>
<path d="M1292 598.3L1306.6 598.3" stroke="#ff0000" stroke-width="1.2" fill="none"/>
<text x="1314" y="598.8" fill="#ffff00" font-size="4.3" text-anchor="start" font-weight="bold" textLength="68" lengthAdjust="spacingAndGlyphs">TRAVEL DISTANCE IN BASEMENT</text>
<text x="1314" y="603.5" fill="#ffff00" font-size="4.3" text-anchor="start" font-weight="bold" textLength="68" lengthAdjust="spacingAndGlyphs">25m MAXIMUM DIRECT DISTANCE</text>
<text x="1314" y="608.2" fill="#ffff00" font-size="4.3" text-anchor="start" font-weight="bold" textLength="73" lengthAdjust="spacingAndGlyphs">45m MAXIMUM INDIRECT DISTANCE</text>
<text x="1314" y="612.9" fill="#ffff00" font-size="4.3" text-anchor="start" font-weight="bold" textLength="36" lengthAdjust="spacingAndGlyphs">FROM DEAD ENDS</text>
<text x="1314" y="617.6" fill="#ffff00" font-size="4.3" text-anchor="start" font-weight="bold" textLength="68" lengthAdjust="spacingAndGlyphs">12m MAXIMUM DIRECT DISTANCE</text>
<text x="1314" y="622.3" fill="#ffff00" font-size="4.3" text-anchor="start" font-weight="bold" textLength="73" lengthAdjust="spacingAndGlyphs">18m MAXIMUM INDIRECT DISTANCE</text>
<circle cx="1302.5" cy="633.6" r="3.6" fill="none" stroke="#ff0000" stroke-width="1.4"/>
<text x="1314" y="635" fill="#ffff00" font-size="4.3" text-anchor="start" font-weight="bold" textLength="58" lengthAdjust="spacingAndGlyphs">VERTICAL CAVITY FIRE STOP</text>
<path d="M1298 641L1307 641L1307 647L1310 647L1302.5 654L1295 647L1298 647z" stroke="None" stroke-width="0" fill="#20e8f0"/>
<text x="1314" y="649" fill="#ffff00" font-size="4.3" text-anchor="start" font-weight="bold" textLength="35" lengthAdjust="spacingAndGlyphs">MEANS OF ESCAPE</text>
<path d="M1298 658.5L1307 658.5L1307 661L1298 661z" stroke="None" stroke-width="0" fill="#20e8f0"/>
<path d="M1298 662.5L1307 662.5L1307 665L1310 665L1302.5 672L1295 665L1298 665z" stroke="None" stroke-width="0" fill="#20e8f0"/>
<text x="1314" y="666.5" fill="#ffff00" font-size="4.3" text-anchor="start" font-weight="bold" textLength="67" lengthAdjust="spacingAndGlyphs">ALTERNATIVE MEANS OF ESCAPE</text>
<text x="1298.5" y="680.5" fill="#ffff00" font-size="4.3" text-anchor="start" font-weight="bold" textLength="78" lengthAdjust="spacingAndGlyphs">NOTE: ESCAPE LIGHTING (CORRIDOR/</text>
<text x="1298.5" y="685.3" fill="#ffff00" font-size="4.3" text-anchor="start" font-weight="bold" textLength="82" lengthAdjust="spacingAndGlyphs">STAIRCASE) TO CONFORM TO BS 5266</text>
<text x="1298.5" y="690.1" fill="#ffff00" font-size="4.3" text-anchor="start" font-weight="bold" textLength="62" lengthAdjust="spacingAndGlyphs">EMERGENCY LIGHTING: PART 1</text>
</g>
<g id="ucs" fill="none" stroke="#2a5ae6" stroke-width="1.200"><path d="M17.500 945.500V1032.500H67.500z"/><path d="M17.500 1024.500H25.500V1032.500M20.500 969.500L25 975.500L31 970M25 975.500V983.500M46 1021L57 1031M57 1021L46 1031"/></g>
<g stroke="#222" stroke-width="1" fill="none"><path d="M1221.500 690.500l5-2.500 6 2.500-6 2.500z"/><path d="M1226 691.500h9"/></g>
</svg>
<div id="cmdhist">
<div style="left:646px;top:777px;width:634px;height:30px;line-height:14px;padding:2px 2px 0">Autodesk DWG.  This file is a TrustedDWG last saved by an Autodesk application or Autodesk
licensed application.</div>
<div style="left:646px;top:812px;width:60px;height:15px;line-height:15px;padding:0 2px">Command:</div>
<div style="left:646px;top:832px;width:60px;height:15px;line-height:14px;padding:0 2px">Command:</div>
</div>
<div class="abs" style="left:585px;top:849px;width:55px;height:27px;background:rgba(120,120,120,.92);border-radius:2px"></div>
<svg class="abs" style="left:585px;top:849px" width="55" height="27"><g fill="#c8c8c8"><rect x="4" y="6" width="1.500" height="1.500"/><rect x="7" y="6" width="1.500" height="1.500"/><rect x="4" y="9" width="1.500" height="1.500"/><rect x="7" y="9" width="1.500" height="1.500"/><rect x="4" y="12" width="1.500" height="1.500"/><rect x="7" y="12" width="1.500" height="1.500"/><rect x="4" y="15" width="1.500" height="1.500"/><rect x="7" y="15" width="1.500" height="1.500"/><rect x="4" y="18" width="1.500" height="1.500"/><rect x="7" y="18" width="1.500" height="1.500"/></g><path d="M15 10l7 7M22 10l-7 7" stroke="#fff" stroke-width="1.800"/><path d="M37 20l7-8" stroke="#fff" stroke-width="2.200"/><path d="M43 8a4 4 0 1 0 5 5l-3 0-2-2z" fill="#fff"/></svg>
<div class="abs" style="left:640px;top:851px;width:695px;height:23px;background:rgba(255,255,255,.93);border:1px solid #b8b8b8;border-radius:2px;box-shadow:0 1px 2px rgba(0,0,0,.3)"></div>
<svg class="abs" style="left:644px;top:855px" width="30" height="16"><rect x=".5" y=".5" width="14" height="11" fill="#f4f4f4" stroke="#777"/><rect x="1" y="1" width="13" height="2.500" fill="#888"/><path d="M3 6l2 1.500-2 1.500M6 9.500h3" stroke="#555" stroke-width=".9" fill="none"/><path d="M19 5h6l-3 3z" fill="#999"/></svg>
<div class="abs" style="left:677px;top:855px;font-family:'Liberation Mono',monospace;font-style:italic;font-size:11.67px;color:#a4a4a4">Type a command</div>
<svg class="abs" style="left:1322px;top:858px" width="10" height="8"><path d="M1 6l4-5 4 5z" fill="#555"/></svg>
<svg class="abs" style="left:1840px;top:5px" width="70" height="20"><path d="M12 12h9" stroke="#222" stroke-width="3.400"/><path d="M12 12h9" stroke="#f4f4f4" stroke-width="1.800"/><path d="M33.500 7.500h6v6h-6zM31.500 9.500h6v6h-6z" fill="#8a8a8a" stroke="#222" stroke-width="2.600"/><path d="M33.500 7.500h6v6h-6zM31.500 9.500h6v6h-6z" fill="none" stroke="#f4f4f4" stroke-width="1.200"/><path d="M51 6l8 8M59 6l-8 8" stroke="#222" stroke-width="3.400"/><path d="M51 6l8 8M59 6l-8 8" stroke="#f4f4f4" stroke-width="1.800"/></svg>
<div class="abs" style="left:1874px;top:258px;width:35px;height:135px;background:#939393;border:1px solid #707070;border-radius:4px;box-shadow:inset 0 0 0 1px #9c9c9c"></div>
<svg class="abs" style="left:1874px;top:258px" width="35" height="135" fill="none" stroke="#a8a8a8" stroke-width="1.300"><circle cx="27" cy="7" r="3"/><path d="M4 12h27" stroke="#858585"/><circle cx="15" cy="33" r="5"/><path d="M22 40h-8a8 8 0 1 1 8-8v6"/><path d="M4 49h27" stroke="#858585"/><path d="M9 78c-3-4-5-7-3-8s4 2 5 4v-12c0-2 3-2 3 0v-3c0-2 3-2 3 0v2c0-2 3-2 3 0v3c0-2 3-2 3 0v10c0 4-3 6-7 6z"/><path d="M6 92l12 12M18 92l-12 12M6 92h4M6 92v4M18 92h-4M18 92v4M6 104h4M6 104v-4"/><circle cx="24" cy="108" r="4"/><path d="M27 111l4 4" stroke-width="2"/><path d="M15 124h6l-3 3z" fill="#a0a0a0" stroke="none"/><circle cx="27" cy="128" r="3"/></svg>
<div class="abs" style="left:1898px;top:299px;font-size:8px;font-weight:bold;color:#a6a6a6">2D</div>
</div>
<div id="status"><svg class="abs" style="left:0;top:0" width="1919" height="5"><path d="M0 5V2c4-2 6-2 8-2h104c6 0 6 3 8 5z" fill="#4a4a4a"/><path d="M108 5c3-3 4-5 10-5h18c6 0 7 2 9 5z" fill="#5a5a5a"/><path d="M150 5c3-3 4-5 10-5h8c5 0 6 2 8 5z" fill="#4a4a4a"/><g fill="#585858"><rect x="1437" y="2" width="40" height="3"/><rect x="1480" y="2" width="101" height="3"/><rect x="1584" y="2" width="62" height="3"/><rect x="1649" y="2" width="72" height="3"/><rect x="1724" y="2" width="38" height="3"/><rect x="1764" y="2" width="24" height="3"/><rect x="1791" y="2" width="24" height="3"/><rect x="1818" y="2" width="49" height="3"/><rect x="1870" y="2" width="49" height="3"/></g><g fill="#5a8ac0"><rect x="1504" y="2" width="23" height="3"/><rect x="1584" y="2" width="22" height="3"/><rect x="1608" y="2" width="21" height="3"/></g><g fill="#e8e8e8"><rect x="34" y="3" width="2" height="2"/><rect x="38" y="3" width="2" height="2"/><rect x="44" y="3" width="2" height="2"/><rect x="50" y="3" width="1" height="2"/><rect x="57" y="3" width="2" height="2"/><rect x="82" y="3" width="4" height="2"/><rect x="88" y="3" width="4" height="2"/></g></svg></div>
</body>
</html>
